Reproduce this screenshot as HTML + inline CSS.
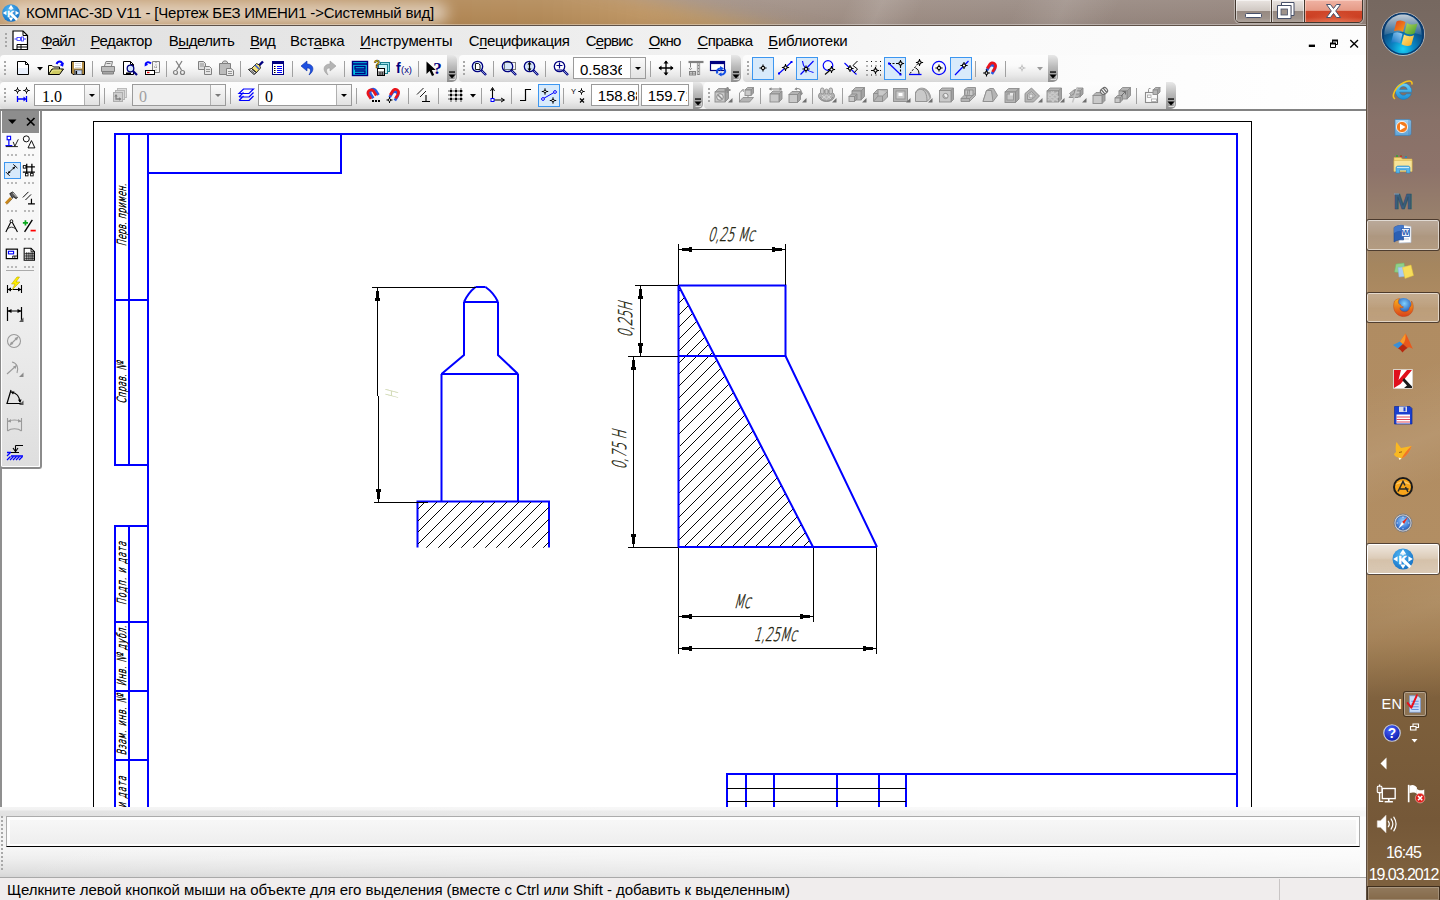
<!DOCTYPE html>
<html lang="ru"><head><meta charset="utf-8"><title>КОМПАС-3D V11</title>
<style>
*{box-sizing:border-box}
html,body{margin:0;padding:0;width:1440px;height:900px;overflow:hidden;background:#fff;font-family:'Liberation Sans',sans-serif;font-size:15px;color:#000}
.abs{position:absolute}
#root{position:absolute;left:0;top:0;width:1440px;height:900px;overflow:hidden}
.t{position:absolute;white-space:pre;line-height:1}
svg{position:absolute;overflow:visible}
.tbp{position:absolute;height:27px;border-radius:4px 0 0 4px;background:linear-gradient(#fdfdfd 0%,#fafafa 40%,#e9e9e9 75%,#d6d6d6 100%)}
.chev{position:absolute;height:27px;width:10px;border-radius:0 5px 5px 0;background:linear-gradient(#e8e8e8 0%,#b9b9b9 45%,#8f8f8f 100%)}
.sep{position:absolute;width:1px;height:16px;background:#a0a0a0}
.grip{position:absolute;width:2px;height:15px;background:repeating-linear-gradient(#a8a8a8 0 2px,transparent 2px 4px)}
.combo{position:absolute;height:22px;border:1px solid #9a9a9a;background:#fff}
.combo .dd{position:absolute;right:0;top:0;bottom:0;width:15px;border-left:1px solid #b0b0b0;background:linear-gradient(#fafafa,#e2e2e2)}
.combo .dd:after{content:"";position:absolute;left:4px;top:9px;border:3px solid transparent;border-top:3px solid #000;border-bottom:0}
.combo.dis{background:#f0f0f0}
.combo.dis .dd:after{border-top-color:#7a7a7a}
.sel{position:absolute;width:22px;height:23px;border:1px solid #3c96f0;background:#d8eafb}
</style></head>
<body><div id="root">
<div class="abs" style="left:0;top:0;width:1367px;height:26px;overflow:hidden;background:linear-gradient(90deg,#a39186 600px,#9f8e84 810px,#998a82 1000px,#918179 1367px)">
<div class="abs" style="left:-40px;top:-40px;width:1000px;height:106px;filter:blur(9px)"><div class="abs" style="left:0;top:0;width:1000px;height:106px;clip-path:polygon(0 0,531px 0,979px 106px,0 106px);background:linear-gradient(90deg,#c6a177 40px,#bc9364 240px,#b18755 490px,#b28957 580px,#bd9462 680px,#bc9868 760px,#b99a70 1000px)"></div></div>
<div class="abs" style="left:700px;top:0;width:667px;height:26px;background:linear-gradient(115deg,transparent 0,transparent 22%,rgba(255,255,255,.12) 27%,transparent 33%,transparent 47%,rgba(255,255,255,.10) 54%,transparent 62%,transparent 100%)"></div>
<div class="abs" style="left:0;top:0;width:1367px;height:26px;background:linear-gradient(rgba(255,255,255,.08) 0,rgba(255,255,255,.02) 60%,rgba(0,0,0,.03) 100%)"></div>
</div>
<div class="abs" style="left:8px;top:3px;width:440px;height:20px;border-radius:10px;background:rgba(255,255,255,.55);filter:blur(7px)"></div>
<div class="abs" style="left:0;top:25px;width:1367px;height:1px;background:#5e5148"></div>
<div class="abs" style="left:0;top:24px;width:1367px;height:1px;background:rgba(255,255,255,.35)"></div>
<svg style="left:1px;top:3px" width="20" height="20" viewBox="0 0 24 24"><defs><radialGradient id="kg0" cx="40%" cy="30%" r="75%"><stop offset="0" stop-color="#4fb4f2"/><stop offset="1" stop-color="#126fc4"/></radialGradient></defs><circle cx="12" cy="12" r="10.5" fill="url(#kg0)"/><path d="M12 2.2L14.8 6.6H9.2ZM12 21.8L9.2 17.4H14.8ZM2.2 12L6.6 9.2V14.8ZM21.8 12L17.4 14.8V9.2Z" fill="#fff"/><path d="M9.3 6.9H14.7M12 6.9V8.6" stroke="#fff" stroke-width="1.3"/><text x="7.6" y="16.6" font-family="'Liberation Sans',sans-serif" font-weight="bold" font-size="11.5" fill="#fff" stroke="#fff" stroke-width=".5">K</text><path d="M11.8 12.6L19.3 20.1" stroke="#fff" stroke-width="3"/></svg>
<div class="t" style="left:26px;top:5px;font-size:15px;color:#000;letter-spacing:-0.191px;">КОМПАС-3D V11 - [Чертеж БЕЗ ИМЕНИ1 ->Системный вид]</div>
<div class="abs" style="left:0;top:26px;width:1366px;height:29px;background:linear-gradient(90deg,#e0e0e0 0,#e6e6e6 300px,#f1f1f1 700px,#fafafa 1000px,#fdfdfd 1366px)"></div>
<div class="grip" style="left:5px;top:33px;height:15px"></div>
<div class="t" style="left:41.25px;top:33px;font-size:15px;color:#000;letter-spacing:-0.910px;"><span style="text-decoration:underline;text-underline-offset:2px">Ф</span>айл</div>
<div class="t" style="left:90.5px;top:33px;font-size:15px;color:#000;letter-spacing:-0.385px;"><span style="text-decoration:underline;text-underline-offset:2px">Р</span>едактор</div>
<div class="t" style="left:168.75px;top:33px;font-size:15px;color:#000;letter-spacing:-0.463px;">В<span style="text-decoration:underline;text-underline-offset:2px">ы</span>делить</div>
<div class="t" style="left:250px;top:33px;font-size:15px;color:#000;letter-spacing:-0.714px;"><span style="text-decoration:underline;text-underline-offset:2px">В</span>ид</div>
<div class="t" style="left:290px;top:33px;font-size:15px;color:#000;letter-spacing:-0.181px;">Вст<span style="text-decoration:underline;text-underline-offset:2px">а</span>вка</div>
<div class="t" style="left:360px;top:33px;font-size:15px;color:#000;letter-spacing:-0.094px;"><span style="text-decoration:underline;text-underline-offset:2px">И</span>нструменты</div>
<div class="t" style="left:468.75px;top:33px;font-size:15px;color:#000;letter-spacing:-0.382px;">С<span style="text-decoration:underline;text-underline-offset:2px">п</span>ецификация</div>
<div class="t" style="left:585.75px;top:33px;font-size:15px;color:#000;letter-spacing:-0.771px;">С<span style="text-decoration:underline;text-underline-offset:2px">е</span>рвис</div>
<div class="t" style="left:648.75px;top:33px;font-size:15px;color:#000;letter-spacing:-0.715px;"><span style="text-decoration:underline;text-underline-offset:2px">О</span>кно</div>
<div class="t" style="left:697.5px;top:33px;font-size:15px;color:#000;letter-spacing:-0.549px;"><span style="text-decoration:underline;text-underline-offset:2px">С</span>правка</div>
<div class="t" style="left:768.25px;top:33px;font-size:15px;color:#000;letter-spacing:-0.203px;"><span style="text-decoration:underline;text-underline-offset:2px">Б</span>иблиотеки</div>
<div class="abs" style="left:0;top:55px;width:1366px;height:54px;background:linear-gradient(90deg,#e2e2e2 0,#ececec 400px,#f6f6f6 800px,#fcfcfc 1100px,#fff 1366px)"></div>
<div class="tbp" style="left:0px;top:55px;width:447px"></div><div class="chev" style="left:447px;top:55px"></div><svg style="left:448px;top:70px" width="8" height="10" viewBox="0 0 8 10"><rect x="1" y="1.4" width="6" height="1.3" fill="#000"/><path d="M.5 4.5H7.5L4 8.5Z" fill="#000"/><path d="M1.5 9.5H7L7.5 5.5" fill="none" stroke="#fff" stroke-width=".8" opacity=".8"/></svg>
<div class="grip" style="left:4px;top:61px"></div>
<svg style="left:15px;top:60px" width="16" height="16" viewBox="0 0 16 16"><path d="M2.5 1.5H10.5L13.5 4.5V14.5H2.5Z" fill="#fff" stroke="#000"/><path d="M10.5 1.5V4.5H13.5" fill="none" stroke="#000"/><path d="M3 8H13V14H3Z" fill="#dfe9fb" opacity=".7"/></svg>
<svg style="left:48px;top:60px" width="16" height="16" viewBox="0 0 16 16"><path d="M.5 14.5V5.5H4L5.5 7H11.5V9" fill="#fffbd0" stroke="#000"/><path d="M.5 14.5L4 9H15.5L11.5 14.5Z" fill="#cfcb62" stroke="#000"/><path d="M2.5 13.5L5 10H13" fill="none" stroke="#f4f0a0" stroke-width=".9"/><path d="M8.5 4C10 .5 13.5 .5 14.5 4" fill="none" stroke="#0000ff" stroke-width="2"/><path d="M16 2.5L15 6.8L11.6 5Z" fill="#0000ff"/></svg>
<svg style="left:70px;top:60px" width="16" height="16" viewBox="0 0 16 16"><path d="M1.5 1.5H14.5V14.5H3L1.5 13Z" fill="#b08a42" stroke="#000"/><rect x="4" y="2" width="8" height="6.5" fill="#fff"/><path d="M5 3.5H11M5 5.5H11M5 7.5H11" stroke="#cfcfcf" stroke-width=".8"/><rect x="4.5" y="10" width="7.5" height="4.5" fill="#c9d9f2" stroke="#444" stroke-width=".7"/><rect x="5.5" y="11" width="1.6" height="3" fill="#000"/></svg>
<svg style="left:100px;top:60px" width="16" height="16" viewBox="0 0 16 16"><path d="M4.5 6L6 1.5H12.5L11.5 6" fill="#e8e8e8" stroke="#808080"/><path d="M1.5 6.5H14.5V11.5H1.5Z" fill="#bdbdbd" stroke="#808080"/><path d="M2.5 11.5H13.5V14H2.5Z" fill="#a5a5a5" stroke="#808080"/><path d="M6.5 3.5H10.5" stroke="#808080"/></svg>
<svg style="left:122px;top:60px" width="16" height="16" viewBox="0 0 16 16"><path d="M1.5 1.5H8.5L11.5 4.5V14.5H1.5Z" fill="#fff" stroke="#000"/><path d="M8.5 1.5V4.5H11.5" fill="none" stroke="#000"/><circle cx="8.5" cy="8.5" r="3.3" fill="#d6e6fa" stroke="#000080" stroke-width="1.3"/><path d="M11 11L15 15" stroke="#000080" stroke-width="2.2"/><path d="M4 13.5H9" stroke="#000" stroke-width="2"/></svg>
<svg style="left:144px;top:60px" width="16" height="16" viewBox="0 0 16 16"><path d="M8.5 1.5H15.5V12.5H8.5Z" fill="#f4f4f4" stroke="#808080"/><path d="M12 2V12" stroke="#808080" stroke-dasharray="1 1.5"/><path d="M10 7H14" stroke="#808080" stroke-dasharray="1 1"/><path d="M1.5 4.5C2 2 5 1.5 7 3.5" fill="none" stroke="#0000ff" stroke-width="2"/><path d="M0.6 6.5L1 2.8L4.2 4.8Z" fill="#0000ff"/><rect x="1.5" y="10.5" width="9" height="4" fill="#fff" stroke="#000"/><path d="M3 12.5H5.5" stroke="#e00" stroke-width="1.4"/></svg>
<svg style="left:171px;top:60px" width="16" height="16" viewBox="0 0 16 16"><path d="M5 1L10.5 10M11 1L5.5 10" stroke="#808080" stroke-width="1.3" fill="none"/><circle cx="4.5" cy="12.5" r="2" fill="none" stroke="#808080" stroke-width="1.2"/><circle cx="11.5" cy="12.5" r="2" fill="none" stroke="#808080" stroke-width="1.2"/></svg>
<svg style="left:197px;top:60px" width="16" height="16" viewBox="0 0 16 16"><path d="M1.5 1.5H6.5L8.5 3.5V9.5H1.5Z" fill="#dcdcdc" stroke="#808080"/><path d="M3 4H7M3 6H7" stroke="#808080" stroke-width=".8"/><path d="M7.5 6.5H12.5L14.5 8.5V14.5H7.5Z" fill="#e6e6e6" stroke="#808080"/><path d="M9 9.5H13M9 11.5H13" stroke="#808080" stroke-width=".8"/></svg>
<svg style="left:218px;top:60px" width="16" height="16" viewBox="0 0 16 16"><path d="M1.5 3.5H12.5V14.5H1.5Z" fill="#bcbcbc" stroke="#808080"/><path d="M4.5 3.5V2L6 1H8L9.5 2V3.5Z" fill="#d5d5d5" stroke="#808080"/><path d="M8.5 8.5H13L15.5 10.5V15.5H8.5Z" fill="#ececec" stroke="#808080"/><path d="M10 11.5H14M10 13.5H14" stroke="#808080" stroke-width=".8"/></svg>
<svg style="left:248px;top:60px" width="16" height="16" viewBox="0 0 16 16"><path d="M15 1.5L10.5 6" stroke="#000080" stroke-width="2.4"/><path d="M11.5 5L8.5 3.5L3.5 8.5L8.5 12.5L12.5 8Z" fill="#f5e27a" stroke="#000" stroke-width=".8"/><path d="M7 5L11 9" stroke="#3a5fcf" stroke-width="1.6"/><path d="M3.5 8.5L0.5 9.5L6 14.5L8.5 12.5Z" fill="#fff" stroke="#000" stroke-width=".9"/><path d="M2.5 10L6.5 13.5M4 9.5L7.5 12.5" stroke="#000" stroke-width=".7"/></svg>
<svg style="left:270px;top:60px" width="16" height="16" viewBox="0 0 16 16"><rect x="2.5" y="1.5" width="11" height="13" fill="#fff" stroke="#000080"/><rect x="2.5" y="1.5" width="11" height="2.5" fill="#000080"/><path d="M4 6.5H5.5M4 8.5H5.5M4 10.5H5.5M4 12.5H5.5" stroke="#000" stroke-width="1.2"/><path d="M7 6.5H12M7 8.5H12M7 10.5H12M7 12.5H12" stroke="#0000ff" stroke-width="1.2"/></svg>
<svg style="left:300px;top:60px" width="16" height="16" viewBox="0 0 16 16"><path d="M7 1L1 6L7 11V8C10 8 12 9.5 9 15C15 11 14 4 7 4Z" fill="#1e50e0" stroke="#0a2fa8" stroke-width=".6"/></svg>
<svg style="left:321px;top:60px" width="16" height="16" viewBox="0 0 16 16"><path d="M9 1L15 6L9 11V8C6 8 4 9.5 7 15C1 11 2 4 9 4Z" fill="#b4b4b4" stroke="#a0a0a0" stroke-width=".6"/></svg>
<svg style="left:352px;top:60px" width="16" height="16" viewBox="0 0 16 16"><rect x=".5" y="1.5" width="15" height="14" fill="#00c8e8" stroke="#000080" stroke-width="1.4"/><path d="M.5 4H15.5" stroke="#000080" stroke-width="1.6"/><path d="M3 6.5H13V9H3ZM3 11H13V13.5H3" fill="none" stroke="#000080" stroke-width="1.3"/></svg>
<svg style="left:374px;top:60px" width="16" height="16" viewBox="0 0 16 16"><rect x="6.5" y="2.5" width="9" height="9" fill="#9adfe8" stroke="#1a7f8f"/><rect x="4.5" y="4.5" width="9" height="9" fill="#c9f0f4" stroke="#1a7f8f"/><rect x="3.5" y="8.5" width="7" height="7" fill="#fff" stroke="#000"/><path d="M3.5 12H10.5M3.5 14H10.5M6 12V15.5M8.3 12V15.5" stroke="#000" stroke-width=".8"/><text x="0" y="8" font-family="'Liberation Sans',sans-serif" font-weight="bold" font-size="10" fill="#ffe400" stroke="#000" stroke-width=".5">?</text></svg>
<svg style="left:396px;top:60px" width="16" height="16" viewBox="0 0 16 16"><text x="0" y="13" font-family="'Liberation Sans',sans-serif" font-weight="bold" font-size="14" fill="#000080">f</text><text x="5" y="12.5" font-family="'Liberation Sans',sans-serif" font-size="9.5" fill="#000080" textLength="11" lengthAdjust="spacingAndGlyphs">(x)</text></svg>
<svg style="left:426px;top:60px" width="16" height="16" viewBox="0 0 16 16"><path d="M.5 1.5V14L3.6 11L6 16L8.2 15L5.8 10H9.8Z" fill="#000"/><text x="7.2" y="13.5" font-family="'Liberation Serif',serif" font-weight="bold" font-size="17" fill="#000080">?</text></svg>
<svg style="left:36.5px;top:67px" width="6" height="3.4" viewBox="0 0 6 3.4"><path d="M0 0H6L3 3.4Z" fill="#000"/></svg>
<div class="sep" style="left:92px;top:61px"></div>
<div class="sep" style="left:166px;top:61px"></div>
<div class="sep" style="left:240px;top:61px"></div>
<div class="sep" style="left:292px;top:61px"></div>
<div class="sep" style="left:344px;top:61px"></div>
<div class="sep" style="left:418px;top:61px"></div>
<div class="tbp" style="left:459px;top:55px;width:272px"></div><div class="chev" style="left:731px;top:55px"></div><svg style="left:732px;top:70px" width="8" height="10" viewBox="0 0 8 10"><rect x="1" y="1.4" width="6" height="1.3" fill="#000"/><path d="M.5 4.5H7.5L4 8.5Z" fill="#000"/><path d="M1.5 9.5H7L7.5 5.5" fill="none" stroke="#fff" stroke-width=".8" opacity=".8"/></svg>
<div class="grip" style="left:463px;top:61px"></div>
<svg style="left:471px;top:60px" width="16" height="16" viewBox="0 0 16 16"><circle cx="6.5" cy="6.5" r="5.2" fill="#d6e6fa" stroke="#000080" stroke-width="1.3"/><path d="M10.5 10.5L15 15" stroke="#000080" stroke-width="2.4"/><path d="M11 11L14.5 14.5" stroke="#9db4e6" stroke-width=".8"/><path d="M4.5 3.5H7.5L9 5V9.5H4.5Z" fill="#fff" stroke="#000" stroke-width=".9"/></svg>
<svg style="left:501px;top:60px" width="16" height="16" viewBox="0 0 16 16"><circle cx="6.5" cy="6.5" r="5.2" fill="#d6e6fa" stroke="#000080" stroke-width="1.3"/><path d="M10.5 10.5L15 15" stroke="#000080" stroke-width="2.4"/><path d="M11 11L14.5 14.5" stroke="#9db4e6" stroke-width=".8"/><rect x="3.5" y="2.5" width="11" height="7" fill="none" stroke="#000" stroke-dasharray="1 1"/></svg>
<svg style="left:523px;top:60px" width="16" height="16" viewBox="0 0 16 16"><circle cx="6.5" cy="6.5" r="5.2" fill="#d6e6fa" stroke="#000080" stroke-width="1.3"/><path d="M10.5 10.5L15 15" stroke="#000080" stroke-width="2.4"/><path d="M11 11L14.5 14.5" stroke="#9db4e6" stroke-width=".8"/><path d="M6.5 2.5V10.5" stroke="#000" stroke-width="1.2"/><path d="M4.5 4.5L6.5 2L8.5 4.5ZM4.5 8.5L6.5 11L8.5 8.5Z" fill="#000"/></svg>
<svg style="left:553px;top:60px" width="16" height="16" viewBox="0 0 16 16"><circle cx="6.5" cy="6.5" r="5.2" fill="#fff" stroke="#000080" stroke-width="1.3"/><path d="M10.5 10.5L15 15" stroke="#000080" stroke-width="2.4"/><path d="M11 11L14.5 14.5" stroke="#9db4e6" stroke-width=".8"/><path d="M3.5 5.5H9.5M6.5 2.5V8.5M3.5 10H9.5" stroke="#000080" stroke-width="1.2"/></svg>
<svg style="left:657.5px;top:60px" width="16" height="16" viewBox="0 0 16 16"><path d="M8 1V15M1 8H15" stroke="#000" stroke-width="1.3"/><path d="M5.5 3.5L8 .5L10.5 3.5ZM5.5 12.5L8 15.5L10.5 12.5ZM3.5 5.5L.5 8L3.5 10.5ZM12.5 5.5L15.5 8L12.5 10.5Z" fill="#000"/></svg>
<svg style="left:688px;top:60px" width="16" height="16" viewBox="0 0 16 16"><path d="M10.5 2V15" stroke="#808080" stroke-width="3.2"/><path d="M9.3 3L11.7 5M9.3 6L11.7 8M9.3 9L11.7 11M9.3 12L11.7 14M11.7 3L9.3 5M11.7 6L9.3 8M11.7 9L9.3 11M11.7 12L9.3 14" stroke="#fff" stroke-width=".7"/><path d="M.5 2H15.5" stroke="#808080" stroke-width="2.2"/><path d="M2.5 3V7.5" stroke="#808080"/><path d="M3.5 8C3.5 10 1 10 1.5 8" fill="none" stroke="#808080"/><rect x="1.5" y="11.5" width="6" height="3.5" fill="#ddd" stroke="#808080"/><path d="M4.5 11.5V15M1.5 13.2H7.5" stroke="#808080" stroke-width=".8"/></svg>
<svg style="left:710px;top:60px" width="16" height="16" viewBox="0 0 16 16"><rect x=".5" y="1.5" width="14" height="9" fill="#fff" stroke="#000080" stroke-width="1.2"/><rect x=".5" y="1.5" width="14" height="2.6" fill="#000080"/><path d="M7.5 13.5C6 11 8 8 11 8.5" fill="none" stroke="#1450e6" stroke-width="2"/><path d="M10 6L14 8.6L10.2 11Z" fill="#1450e6"/><path d="M15 9.5C16 12.5 13.5 15 10.5 14.5" fill="none" stroke="#1450e6" stroke-width="2"/><path d="M11.5 16.5L8 14.3L11.4 12.2Z" fill="#1450e6"/></svg>
<div class="sep" style="left:493px;top:61px"></div>
<div class="sep" style="left:545px;top:61px"></div>
<div class="sep" style="left:650px;top:61px"></div>
<div class="sep" style="left:680px;top:61px"></div>
<div class="combo" style="left:573px;top:57px;width:73px"><div class="dd"></div><div class="abs" style="left:6px;top:0;width:42px;height:20px;overflow:hidden"><div class="t" style="left:0;font-size:15px;top:4.3px;color:#000">0.5836</div></div></div>
<div class="tbp" style="left:743px;top:55px;width:305px"></div><div class="chev" style="left:1048px;top:55px"></div><svg style="left:1049px;top:70px" width="8" height="10" viewBox="0 0 8 10"><rect x="1" y="1.4" width="6" height="1.3" fill="#000"/><path d="M.5 4.5H7.5L4 8.5Z" fill="#000"/><path d="M1.5 9.5H7L7.5 5.5" fill="none" stroke="#fff" stroke-width=".8" opacity=".8"/></svg>
<div class="grip" style="left:747px;top:61px"></div>
<div class="sel" style="left:752px;top:57px"></div>
<div class="sel" style="left:796px;top:57px"></div>
<div class="sel" style="left:884px;top:57px"></div>
<div class="sel" style="left:950px;top:57px"></div>
<svg style="left:755px;top:60px" width="16" height="16" viewBox="0 0 16 16"><circle cx="8" cy="8" r="1.6" fill="#fff" stroke="#000" stroke-width="1.1"/><path d="M4.4 8H6.4M9.6 8H11.6M8 4.4V6.4M8 9.6V11.6" stroke="#000" stroke-width="1.1"/></svg>
<svg style="left:777px;top:60px" width="16" height="16" viewBox="0 0 16 16"><path d="M2 13.5L14.5 2" stroke="#0000ff" stroke-width="1.1"/><rect x="1" y="12.5" width="2" height="2" fill="#0000ff"/><rect x="13.5" y="1" width="2" height="2" fill="#0000ff"/><circle cx="8.5" cy="7.5" r="1.6" fill="#fff" stroke="#000" stroke-width="1.1"/><path d="M4.9 7.5H6.9M10.1 7.5H12.1M8.5 3.9V5.9M8.5 9.1V11.1" stroke="#000" stroke-width="1.1"/></svg>
<svg style="left:799px;top:60px" width="16" height="16" viewBox="0 0 16 16"><path d="M3.5 1C4 7 7 11 14.5 12.5" fill="none" stroke="#0000ff" stroke-width="1.1"/><path d="M1.5 14.5L14.5 1" stroke="#0000ff" stroke-width="1.1"/><circle cx="7" cy="9" r="1.6" fill="#fff" stroke="#000" stroke-width="1.1"/><path d="M3.4 9H5.4M8.6 9H10.6M7 5.4V7.4M7 10.6V12.6" stroke="#000" stroke-width="1.1"/></svg>
<svg style="left:821px;top:60px" width="16" height="16" viewBox="0 0 16 16"><circle cx="7" cy="5.5" r="4.8" fill="none" stroke="#0000ff" stroke-width="1.2"/><path d="M4 14.5L11 8.5" stroke="#000" stroke-width="1.1"/><circle cx="10.5" cy="9.5" r="1.6" fill="#fff" stroke="#000" stroke-width="1.1"/><path d="M6.9 9.5H8.9M12.1 9.5H14.1M10.5 5.9V7.9M10.5 11.1V13.1" stroke="#000" stroke-width="1.1"/></svg>
<svg style="left:843px;top:60px" width="16" height="16" viewBox="0 0 16 16"><path d="M1.5 3L13.5 14.5" stroke="#0000ff" stroke-width="1.1"/><path d="M14.5 1L10 5.5L14.5 9L11 13" fill="none" stroke="#000" stroke-width="1"/><circle cx="7" cy="8.5" r="1.6" fill="#fff" stroke="#000" stroke-width="1.1"/><path d="M3.4 8.5H5.4M8.6 8.5H10.6M7 4.9V6.9M7 10.1V12.1" stroke="#000" stroke-width="1.1"/></svg>
<svg style="left:865px;top:60px" width="16" height="16" viewBox="0 0 16 16"><rect x="1.5" y="1" width="1" height="1" fill="#000"/><rect x="1.5" y="5.5" width="1" height="1" fill="#000"/><rect x="1.5" y="10" width="1" height="1" fill="#000"/><rect x="1.5" y="14.5" width="1" height="1" fill="#000"/><rect x="6" y="1" width="1" height="1" fill="#000"/><rect x="6" y="5.5" width="1" height="1" fill="#000"/><rect x="6" y="10" width="1" height="1" fill="#000"/><rect x="6" y="14.5" width="1" height="1" fill="#000"/><rect x="10.5" y="1" width="1" height="1" fill="#000"/><rect x="10.5" y="5.5" width="1" height="1" fill="#000"/><rect x="10.5" y="10" width="1" height="1" fill="#000"/><rect x="10.5" y="14.5" width="1" height="1" fill="#000"/><rect x="15" y="1" width="1" height="1" fill="#000"/><rect x="15" y="5.5" width="1" height="1" fill="#000"/><rect x="15" y="10" width="1" height="1" fill="#000"/><rect x="15" y="14.5" width="1" height="1" fill="#000"/><circle cx="10.5" cy="10.5" r="1.6" fill="#fff" stroke="#000" stroke-width="1.1"/><path d="M6.9 10.5H8.9M12.1 10.5H14.1M10.5 6.9V8.9M10.5 12.1V14.1" stroke="#000" stroke-width="1.1"/></svg>
<svg style="left:887px;top:60px" width="16" height="16" viewBox="0 0 16 16"><path d="M2 3.5L13.5 14.5" stroke="#0000ff" stroke-width="1.2"/><path d="M2 3.5H13.5V14.5" fill="none" stroke="#000" stroke-width="1.1" stroke-dasharray="2 1.5"/><rect x="1" y="2.5" width="2" height="2" fill="#0000ff"/><rect x="12.5" y="13.5" width="2" height="2" fill="#0000ff"/><circle cx="13.5" cy="3.5" r="1.6" fill="#fff" stroke="#000" stroke-width="1.1"/><path d="M9.9 3.5H11.9M15.1 3.5H17.1M13.5 -0.10000000000000009V1.9M13.5 5.1V7.1" stroke="#000" stroke-width="1.1"/></svg>
<svg style="left:909px;top:60px" width="16" height="16" viewBox="0 0 16 16"><path d="M0 14.5H12.5" stroke="#0000ff" stroke-width="1.3"/><path d="M1 13.5L9 3.5" stroke="#000" stroke-width="1" stroke-dasharray="2 1.5"/><path d="M6.5 8C9 9 10 11 10 14" fill="none" stroke="#000" stroke-width="1"/><circle cx="10.5" cy="2.5" r="1.6" fill="#fff" stroke="#000" stroke-width="1.1"/><path d="M6.9 2.5H8.9M12.1 2.5H14.1M10.5 -1.1V0.8999999999999999M10.5 4.1V6.1" stroke="#000" stroke-width="1.1"/></svg>
<svg style="left:931px;top:60px" width="16" height="16" viewBox="0 0 16 16"><circle cx="8" cy="8" r="6.6" fill="none" stroke="#0000ff" stroke-width="1.2"/><circle cx="8" cy="8" r="1.6" fill="#fff" stroke="#000" stroke-width="1.1"/><path d="M4.4 8H6.4M9.6 8H11.6M8 4.4V6.4M8 9.6V11.6" stroke="#000" stroke-width="1.1"/></svg>
<svg style="left:953px;top:60px" width="16" height="16" viewBox="0 0 16 16"><path d="M2 15L15.5 1" stroke="#0000ff" stroke-width="1.2"/><circle cx="11" cy="5.5" r="1.6" fill="#fff" stroke="#000" stroke-width="1.1"/><path d="M7.4 5.5H9.4M12.6 5.5H14.6M11 1.9V3.9M11 7.1V9.1" stroke="#000" stroke-width="1.1"/></svg>
<svg style="left:983px;top:60px" width="16" height="16" viewBox="0 0 16 16"><g transform="translate(2.5,0) rotate(32 7 6)"><path d="M2.5 11V6A4.5 4.5 0 0 1 11.5 6V11H8.7V6A1.7 1.7 0 0 0 5.3 6V11Z" transform="translate(0.6,2.2)" fill="#2a5ae0"/><path d="M2.5 11V6A4.5 4.5 0 0 1 11.5 6V11H8.7V6A1.7 1.7 0 0 0 5.3 6V11Z" fill="#e8141c"/></g><circle cx="3.5" cy="13" r="1.4" fill="#fff" stroke="#000" stroke-width="1.1"/><path d="M0.10000000000000009 13H2.1M4.9 13H6.9M3.5 9.6V11.6M3.5 14.4V16.4" stroke="#000" stroke-width="1.1"/></svg>
<svg style="left:1014px;top:60px" width="16" height="16" viewBox="0 0 16 16"><circle cx="8" cy="8" r="1.4" fill="#fff" stroke="#b8b8b8" stroke-width="1"/><path d="M4.6 8H6.6M9.4 8H11.4M8 4.6V6.6M8 9.4V11.4" stroke="#b8b8b8" stroke-width="1"/></svg>
<div class="sep" style="left:975px;top:61px"></div>
<div class="sep" style="left:1005px;top:61px"></div>
<svg style="left:1036.5px;top:67px" width="6" height="3.4" viewBox="0 0 6 3.4"><path d="M0 0H6L3 3.4Z" fill="#9a9a9a"/></svg>
<div class="tbp" style="left:0px;top:82px;width:693px"></div><div class="chev" style="left:693px;top:82px"></div><svg style="left:694px;top:97px" width="8" height="10" viewBox="0 0 8 10"><rect x="1" y="1.4" width="6" height="1.3" fill="#000"/><path d="M.5 4.5H7.5L4 8.5Z" fill="#000"/><path d="M1.5 9.5H7L7.5 5.5" fill="none" stroke="#fff" stroke-width=".8" opacity=".8"/></svg>
<div class="grip" style="left:4px;top:88px"></div>
<svg style="left:14px;top:86px" width="16" height="17" viewBox="0 0 16 17"><circle cx="3.5" cy="4.5" r="1.4" fill="#fff" stroke="#000" stroke-width="1"/><path d="M0.2999999999999998 4.5H2.1M4.9 4.5H6.7M3.5 1.2999999999999998V3.1M3.5 5.9V7.7" stroke="#000" stroke-width="1"/><circle cx="12.5" cy="4.5" r="1.4" fill="#fff" stroke="#000" stroke-width="1"/><path d="M9.3 4.5H11.1M13.9 4.5H15.7M12.5 1.2999999999999998V3.1M12.5 5.9V7.7" stroke="#000" stroke-width="1"/><path d="M3.5 10V16M12.5 10V16M3.5 13H11" stroke="#0000ff" stroke-width="1.3"/><path d="M9.5 10.5L12.5 13L9.5 15.5Z" fill="#0000ff"/></svg>
<div class="combo" style="left:34px;top:84px;width:66px"><div class="dd"></div><div class="abs" style="left:7px;top:0;width:42px;height:20px;overflow:hidden"><div class="t" style="left:0;font-family:'Liberation Serif',serif;font-size:16px;top:3.6px;color:#000">1.0</div></div></div>
<div class="sep" style="left:104px;top:88px"></div>
<svg style="left:112px;top:87px" width="16" height="16" viewBox="0 0 16 16"><rect x="5.5" y="1.5" width="9" height="9" fill="#ddd" stroke="#bbb"/><rect x="3.5" y="3.5" width="9" height="9" fill="#d6d6d6" stroke="#b4b4b4"/><rect x="1.5" y="5.5" width="9" height="9" fill="#cfcfcf" stroke="#adadad"/><path d="M4 8V12H8.5" fill="none" stroke="#808080" stroke-width="1.3"/><path d="M2.3 9.5L4 7L5.7 9.5ZM7 10.3L9.5 12L7 13.7Z" fill="#808080"/></svg>
<div class="combo dis" style="left:132px;top:84px;width:94px"><div class="dd"></div><div class="abs" style="left:6px;top:0;width:71px;height:20px;overflow:hidden"><div class="t" style="left:0;font-family:'Liberation Serif',serif;font-size:16px;top:3.6px;color:#a0a0a0">0</div></div></div>
<div class="sep" style="left:230px;top:88px"></div>
<svg style="left:238px;top:87px" width="16" height="16" viewBox="0 0 16 16"><path d="M1 6.5L5.5 2H15.5L11 6.5ZM1 10L5.5 5.5M11 10L15.5 5.5M1 10H11M1 13.5H11M1 13.5L5.5 9M11 13.5L15.5 9" fill="none" stroke="#0000ff" stroke-width="1.2"/></svg>
<div class="combo" style="left:258px;top:84px;width:94px"><div class="dd"></div><div class="abs" style="left:6px;top:0;width:71px;height:20px;overflow:hidden"><div class="t" style="left:0;font-family:'Liberation Serif',serif;font-size:16px;top:3.6px;color:#000">0</div></div></div>
<div class="sep" style="left:356px;top:88px"></div>
<div class="sep" style="left:408px;top:88px"></div>
<div class="sep" style="left:438px;top:88px"></div>
<div class="sep" style="left:481px;top:88px"></div>
<div class="sep" style="left:511px;top:88px"></div>
<div class="sep" style="left:563px;top:88px"></div>
<svg style="left:364px;top:87px" width="16" height="16" viewBox="0 0 16 16"><g transform="translate(0,0) rotate(-32 7 6)"><path d="M2.5 11V6A4.5 4.5 0 0 1 11.5 6V11H8.7V6A1.7 1.7 0 0 0 5.3 6V11Z" transform="translate(2.2,0.6)" fill="#2a5ae0"/><path d="M2.5 11V6A4.5 4.5 0 0 1 11.5 6V11H8.7V6A1.7 1.7 0 0 0 5.3 6V11Z" fill="#e8141c"/></g><rect x="8" y="13" width="2" height="2" fill="#000"/><rect x="11" y="13" width="2" height="2" fill="#000"/><rect x="14" y="13" width="2" height="2" fill="#000"/></svg>
<svg style="left:386px;top:87px" width="16" height="16" viewBox="0 0 16 16"><g transform="translate(2.5,-0.5) rotate(32 7 6)"><path d="M2.5 11V6A4.5 4.5 0 0 1 11.5 6V11H8.7V6A1.7 1.7 0 0 0 5.3 6V11Z" transform="translate(0.6,2.2)" fill="#2a5ae0"/><path d="M2.5 11V6A4.5 4.5 0 0 1 11.5 6V11H8.7V6A1.7 1.7 0 0 0 5.3 6V11Z" fill="#e8141c"/></g><circle cx="3.5" cy="13" r="1.3" fill="#fff" stroke="#000" stroke-width="1"/><path d="M0.5 13H2.2M4.8 13H6.5M3.5 10V11.7M3.5 14.3V16" stroke="#000" stroke-width="1"/></svg>
<svg style="left:416px;top:87px" width="16" height="16" viewBox="0 0 16 16"><path d="M1 7.5L7.5 1M4 10L10 4" stroke="#000" stroke-width=".9"/><path d="M6 14.5H14M10 14.5V8" stroke="#000" stroke-width="1.1"/></svg>
<svg style="left:448px;top:87px" width="16" height="16" viewBox="0 0 16 16"><path d="M0 4H15M0 8H15M0 12H15M3 1V15M8 1V15M13 1V15" stroke="#000" stroke-width="2" opacity=".32" shape-rendering="crispEdges"/><rect x="2" y="3" width="2" height="2" fill="#000" shape-rendering="crispEdges"/><rect x="2" y="7" width="2" height="2" fill="#000" shape-rendering="crispEdges"/><rect x="2" y="11" width="2" height="2" fill="#000" shape-rendering="crispEdges"/><rect x="7" y="3" width="2" height="2" fill="#000" shape-rendering="crispEdges"/><rect x="7" y="7" width="2" height="2" fill="#000" shape-rendering="crispEdges"/><rect x="7" y="11" width="2" height="2" fill="#000" shape-rendering="crispEdges"/><rect x="12" y="3" width="2" height="2" fill="#000" shape-rendering="crispEdges"/><rect x="12" y="7" width="2" height="2" fill="#000" shape-rendering="crispEdges"/><rect x="12" y="11" width="2" height="2" fill="#000" shape-rendering="crispEdges"/></svg>
<svg style="left:489px;top:87px" width="16" height="16" viewBox="0 0 16 16"><path d="M3.5 13V1.5M3.5 13H15" stroke="#000" stroke-width="1.1"/><path d="M1.5 4L3.5 .5L5.5 4M12 11L15.5 13L12 15" fill="none" stroke="#000" stroke-width="1"/><rect x="2" y="11.5" width="3" height="3" fill="#fff" stroke="#0000ff"/></svg>
<svg style="left:519px;top:87px" width="16" height="16" viewBox="0 0 16 16"><path d="M1 13.5H6.5V2.5H12" fill="none" stroke="#000" stroke-width="1.2"/></svg>
<svg style="left:571px;top:87px" width="16" height="16" viewBox="0 0 16 16"><text x="0" y="6.5" font-family="'Liberation Sans',sans-serif" font-size="7.5" fill="#000">Y</text><circle cx="10.5" cy="4.5" r="1.3" fill="#fff" stroke="#000" stroke-width="1"/><path d="M7.3 4.5H9.2M11.8 4.5H13.7M10.5 1.2999999999999998V3.2M10.5 5.8V7.7" stroke="#000" stroke-width="1"/><path d="M9 11.5L13 15.5M13 11.5L9 15.5" stroke="#000" stroke-width="1.2"/></svg>
<svg style="left:469.5px;top:94px" width="6" height="3.4" viewBox="0 0 6 3.4"><path d="M0 0H6L3 3.4Z" fill="#000"/></svg>
<div class="sel" style="left:538px;top:84px"></div>
<svg style="left:541px;top:88px" width="16" height="16" viewBox="0 0 16 16"><circle cx="4" cy="3.5" r="1.3" fill="#fff" stroke="#000" stroke-width="1"/><path d="M0.7999999999999998 3.5H2.7M5.3 3.5H7.2M4 0.2999999999999998V2.2M4 4.8V6.7" stroke="#000" stroke-width="1"/><circle cx="12" cy="12.5" r="1.3" fill="#fff" stroke="#000" stroke-width="1"/><path d="M8.8 12.5H10.7M13.3 12.5H15.2M12 9.3V11.2M12 13.8V15.7" stroke="#000" stroke-width="1"/><path d="M2.5 10.5L13 4.5" stroke="#0000ff" stroke-width="1"/><circle cx="2" cy="11" r="1.4" fill="#fff" stroke="#0000ff"/><circle cx="14" cy="4" r="1.4" fill="#fff" stroke="#0000ff"/></svg>
<div class="combo" style="left:591px;top:84px;width:48px"><div class="abs" style="left:5.7px;top:0;width:39.099999999999994px;height:20px;overflow:hidden"><div class="t" style="left:0;top:3px;font-size:15px">158.88</div></div></div>
<div class="combo" style="left:641px;top:84px;width:48px"><div class="abs" style="left:5.7px;top:0;width:39.099999999999994px;height:20px;overflow:hidden"><div class="t" style="left:0;top:3px;font-size:15px">159.71</div></div></div>
<div class="tbp" style="left:704px;top:82px;width:462px"></div><div class="chev" style="left:1166px;top:82px"></div><svg style="left:1167px;top:97px" width="8" height="10" viewBox="0 0 8 10"><rect x="1" y="1.4" width="6" height="1.3" fill="#000"/><path d="M.5 4.5H7.5L4 8.5Z" fill="#000"/><path d="M1.5 9.5H7L7.5 5.5" fill="none" stroke="#fff" stroke-width=".8" opacity=".8"/></svg>
<div class="grip" style="left:708px;top:88px"></div>
<svg style="left:714px;top:87px" width="19" height="16" viewBox="0 0 19 16"><path d="M1 5.0L4.5 1.5H14.5L11 5.0Z" fill="#b4b4b4" stroke="#8c8c8c" stroke-width=".9"/><path d="M11 5.0L14.5 1.5V11.5L11 15.0Z" fill="#a2a2a2" stroke="#8c8c8c" stroke-width=".9"/><rect x="1" y="5.0" width="10" height="10" fill="#c9c9c9" stroke="#8c8c8c" stroke-width=".9"/><circle cx="6" cy="10" r="3.3" fill="#e6e6e6" stroke="#8c8c8c"/><path d="M4 8L8 12" stroke="#8c8c8c" stroke-width="1.5"/><path d="M13.5 0V6M10.5 3H16.5" stroke="#8c8c8c" stroke-width="1.8"/><path d="M18.5 11V15.5H14Z" fill="#6e6e6e"/></svg>
<svg style="left:738px;top:87px" width="19" height="16" viewBox="0 0 19 16"><path d="M1 15L5 10.5H15.5L11.5 15Z" fill="#b4b4b4" stroke="#8c8c8c" stroke-width=".9"/><path d="M1.5 14.5V6L5 2.5" fill="none" stroke="#8c8c8c" stroke-width=".9"/><path d="M3 4.5L5.2 2.2L5.4 5" fill="none" stroke="#8c8c8c" stroke-width=".8"/><path d="M7 3.0L9.5 0.5H15.5L13 3.0Z" fill="#b4b4b4" stroke="#8c8c8c" stroke-width=".9"/><path d="M13 3.0L15.5 0.5V6.0L13 8.5Z" fill="#a2a2a2" stroke="#8c8c8c" stroke-width=".9"/><rect x="7" y="3.0" width="6" height="5.5" fill="#c9c9c9" stroke="#8c8c8c" stroke-width=".9"/><path d="M10 9V11" stroke="#8c8c8c"/></svg>
<svg style="left:768px;top:87px" width="19" height="16" viewBox="0 0 19 16"><path d="M2 7L5 4H14L11 7Z" fill="#b4b4b4" stroke="#8c8c8c" stroke-width=".9"/><path d="M11 7L14 4V12L11 15Z" fill="#a2a2a2" stroke="#8c8c8c" stroke-width=".9"/><rect x="2" y="7" width="9" height="8" fill="#c9c9c9" stroke="#8c8c8c" stroke-width=".9"/><path d="M1.5 2H13.5" stroke="#8c8c8c" stroke-width="1.1"/><path d="M3.5 .3L.8 2L3.5 3.7ZM11.5 .3L14.2 2L11.5 3.7Z" fill="#8c8c8c"/></svg>
<svg style="left:788px;top:87px" width="19" height="16" viewBox="0 0 19 16"><path d="M1 7.5L4 4.5H12.5L9.5 7.5Z" fill="#b4b4b4" stroke="#8c8c8c" stroke-width=".9"/><path d="M9.5 7.5L12.5 4.5V12.5L9.5 15.5Z" fill="#a2a2a2" stroke="#8c8c8c" stroke-width=".9"/><rect x="1" y="7.5" width="8.5" height="8" fill="#c9c9c9" stroke="#8c8c8c" stroke-width=".9"/><path d="M7.5 2C11 .5 14 3 13.5 7" fill="none" stroke="#8c8c8c" stroke-width="1.1"/><path d="M8.8 .3L6.3 2.3L9.2 3.6ZM11.8 5.8L13.5 8.6L15.2 5.8Z" fill="#8c8c8c"/><path d="M18.5 11V15.5H14Z" fill="#6e6e6e"/></svg>
<svg style="left:818px;top:87px" width="19" height="16" viewBox="0 0 19 16"><ellipse cx="8.5" cy="9" rx="8" ry="5.5" fill="#b4b4b4" stroke="#8c8c8c" stroke-width=".9"/><path d="M2 10C5 15.5 12 15.5 15 10" fill="none" stroke="#8c8c8c"/><rect x="2.5" y="1" width="3.5" height="6" rx="1.7" fill="#c9c9c9" stroke="#8c8c8c" stroke-width=".9"/><rect x="11" y="1" width="3.5" height="6" rx="1.7" fill="#c9c9c9" stroke="#8c8c8c" stroke-width=".9"/><rect x="7" y="2" width="3" height="5" rx="1.5" fill="#c9c9c9" stroke="#8c8c8c" stroke-width=".9"/><path d="M4 8L8.5 12L13 8M4 12L8.5 8L13 12" stroke="#dcdcdc" stroke-width=".9" fill="none"/><path d="M18.5 11V15.5H14Z" fill="#6e6e6e"/></svg>
<svg style="left:848px;top:87px" width="19" height="16" viewBox="0 0 19 16"><path d="M4 4.0L7.5 0.5H16.5L13 4.0Z" fill="#b4b4b4" stroke="#8c8c8c" stroke-width=".9"/><path d="M13 4.0L16.5 0.5V9.5L13 13.0Z" fill="#a2a2a2" stroke="#8c8c8c" stroke-width=".9"/><rect x="4" y="4.0" width="9" height="9" fill="#b4b4b4" stroke="#8c8c8c" stroke-width=".9"/><path d="M1 9.5L3.5 7H9.0L6.5 9.5Z" fill="#b4b4b4" stroke="#8c8c8c" stroke-width=".9"/><path d="M6.5 9.5L9.0 7V12L6.5 14.5Z" fill="#a2a2a2" stroke="#8c8c8c" stroke-width=".9"/><rect x="1" y="9.5" width="5.5" height="5" fill="#c9c9c9" stroke="#8c8c8c" stroke-width=".9"/><path d="M18.5 11V15.5H14Z" fill="#6e6e6e"/></svg>
<svg style="left:872px;top:87px" width="19" height="16" viewBox="0 0 19 16"><path d="M1.5 14.5V6.5L5.5 2.5H15.5V10L11 14.5Z" fill="#b4b4b4" stroke="#8c8c8c" stroke-width=".9"/><path d="M6 3V9H10.5L15 5" fill="#c9c9c9" stroke="#8c8c8c" stroke-width=".9"/><path d="M1.5 6.5H6M6 9L1.8 14M10.5 9V14.5" fill="none" stroke="#8c8c8c" stroke-width=".9"/></svg>
<svg style="left:892px;top:87px" width="19" height="16" viewBox="0 0 19 16"><rect x="1.5" y="1.5" width="14" height="13" fill="#b4b4b4" stroke="#8c8c8c" stroke-width=".9"/><rect x="4" y="4" width="9" height="8" fill="#c9c9c9" stroke="#8c8c8c" stroke-width=".8"/><rect x="6.5" y="6" width="4" height="3" fill="#fff"/><path d="M18.5 11V15.5H14Z" fill="#6e6e6e"/></svg>
<svg style="left:914px;top:87px" width="19" height="16" viewBox="0 0 19 16"><path d="M1.5 14.5V6C3 1.5 7 .5 10 1.5C13.5 2.5 16 6 16.5 11L13 14.5Z" fill="#c9c9c9" stroke="#8c8c8c" stroke-width=".9"/><path d="M1.5 6C3 2.5 6 2 8 2.5C11 3.5 13 7 13 14.5" fill="none" stroke="#8c8c8c" stroke-width=".9"/><path d="M8 2.5C11.5 1.5 15 5 16.5 11" fill="none" stroke="#a2a2a2" stroke-width="1.6"/><path d="M18.5 11V15.5H14Z" fill="#6e6e6e"/></svg>
<svg style="left:938px;top:87px" width="19" height="16" viewBox="0 0 19 16"><path d="M1.5 3.5L4.0 1H15.5L13.0 3.5Z" fill="#b4b4b4" stroke="#8c8c8c" stroke-width=".9"/><path d="M13.0 3.5L15.5 1V12.5L13.0 15.0Z" fill="#a2a2a2" stroke="#8c8c8c" stroke-width=".9"/><rect x="1.5" y="3.5" width="11.5" height="11.5" fill="#c9c9c9" stroke="#8c8c8c" stroke-width=".9"/><circle cx="7.5" cy="9" r="2.6" fill="#efefef" stroke="#8c8c8c" stroke-width="1"/><path d="M5.5 8C6 10.5 8 11.5 9.5 10.5" fill="none" stroke="#a2a2a2" stroke-width="1.3"/></svg>
<svg style="left:960px;top:87px" width="19" height="16" viewBox="0 0 19 16"><path d="M1 14.5V11.5L4.5 8V2.5L7.5 .5H15.5V8.5L9.5 14.5Z" fill="#b4b4b4" stroke="#8c8c8c" stroke-width=".9"/><path d="M5 3H13V8.5H5Z" fill="#c9c9c9" stroke="#8c8c8c" stroke-width=".8"/><path d="M8 3L6.5 11M9.5 3L9 9" stroke="#8c8c8c" stroke-width=".9"/><path d="M1 11.5H9.5L15.5 6M9.5 11.5V14.5" fill="none" stroke="#8c8c8c" stroke-width=".9"/></svg>
<svg style="left:982px;top:87px" width="19" height="16" viewBox="0 0 19 16"><path d="M1 14.5L4.5 3.5L8 1.5H11.5L15.5 8.5L11 14.5Z" fill="#b4b4b4" stroke="#8c8c8c" stroke-width=".9"/><path d="M1 14.5L4.5 3.5H9.5L11 14.5Z" fill="#c9c9c9" stroke="#8c8c8c" stroke-width=".9"/></svg>
<svg style="left:1004px;top:87px" width="19" height="16" viewBox="0 0 19 16"><path d="M1 5.0L4.5 1.5H15.0L11.5 5.0Z" fill="#b4b4b4" stroke="#8c8c8c" stroke-width=".9"/><path d="M11.5 5.0L15.0 1.5V12.0L11.5 15.5Z" fill="#a2a2a2" stroke="#8c8c8c" stroke-width=".9"/><rect x="1" y="5.0" width="10.5" height="10.5" fill="#b4b4b4" stroke="#8c8c8c" stroke-width=".9"/><rect x="3" y="7" width="6.5" height="6" fill="#c9c9c9" stroke="#8c8c8c" stroke-width=".8"/><rect x="6" y="6" width="3" height="2.5" fill="#e8e8e8"/></svg>
<svg style="left:1024px;top:87px" width="19" height="16" viewBox="0 0 19 16"><path d="M1 6.5L7.5 1L15.5 9L9.5 15H1Z" fill="#b4b4b4" stroke="#8c8c8c" stroke-width=".9"/><path d="M3.5 7.5L7.5 4.5L11.5 9L7.5 12.5H3.5Z" fill="#c9c9c9" stroke="#8c8c8c" stroke-width=".8"/><circle cx="7" cy="9" r="2" fill="#e4e4e4" stroke="#8c8c8c" stroke-width=".7"/><path d="M18.5 11V15.5H14Z" fill="#6e6e6e"/></svg>
<svg style="left:1046px;top:87px" width="19" height="16" viewBox="0 0 19 16"><path d="M1 4L4 1H15.5L12.5 4Z" fill="#b4b4b4" stroke="#8c8c8c" stroke-width=".9"/><path d="M12.5 4L15.5 1V12L12.5 15Z" fill="#a2a2a2" stroke="#8c8c8c" stroke-width=".9"/><rect x="1" y="4" width="11.5" height="11" fill="#b4b4b4" stroke="#8c8c8c" stroke-width=".9"/><path d="M2 6.5L12 14M2 10L8 14.5M5 4.5L12.5 10.5M12 5L2 13M12.5 9L6 14.5M8 4.5L2 9.5" stroke="#c9c9c9" stroke-width="1.5"/><path d="M18.5 11V15.5H14Z" fill="#6e6e6e"/></svg>
<svg style="left:1068px;top:87px" width="19" height="16" viewBox="0 0 19 16"><path d="M6 4L9 1H15L12 4Z" fill="#b4b4b4" stroke="#8c8c8c" stroke-width=".9"/><path d="M12 4L15 1V7L12 10Z" fill="#a2a2a2" stroke="#8c8c8c" stroke-width=".9"/><rect x="6" y="4" width="6" height="6" fill="#c9c9c9" stroke="#8c8c8c" stroke-width=".9"/><path d="M1 10.5L4 7H13L10 10.5Z" fill="#b4b4b4" stroke="#8c8c8c" stroke-width=".9"/><path d="M1.5 6.5L6.5 2.5V6L3.5 8.5Z" fill="#b4b4b4" stroke="#8c8c8c" stroke-width=".8"/><path d="M9.5 0L4.5 15.5" stroke="#c4c4c4" stroke-width="1.5"/><path d="M18.5 11V15.5H14Z" fill="#6e6e6e"/></svg>
<svg style="left:1092px;top:87px" width="19" height="16" viewBox="0 0 19 16"><path d="M1 8.5L4 5.5H13L10 8.5Z" fill="#b4b4b4" stroke="#8c8c8c" stroke-width=".9"/><path d="M10 8.5L13 5.5V13.5L10 16.5Z" fill="#a2a2a2" stroke="#8c8c8c" stroke-width=".9"/><rect x="1" y="8.5" width="9" height="8" fill="#c9c9c9" stroke="#8c8c8c" stroke-width=".9"/><g transform="rotate(-40 12 4)"><rect x="8.5" y="1" width="7" height="6" rx="2.5" fill="#fff" stroke="#6e6e6e" stroke-width="1.1"/><path d="M10.8 1V7M13.2 1V7" stroke="#6e6e6e" stroke-width="1.3"/></g></svg>
<svg style="left:1114px;top:87px" width="19" height="16" viewBox="0 0 19 16"><path d="M5 4.0L8.5 0.5H16.5L13 4.0Z" fill="#b4b4b4" stroke="#8c8c8c" stroke-width=".9"/><path d="M13 4.0L16.5 0.5V8.5L13 12.0Z" fill="#a2a2a2" stroke="#8c8c8c" stroke-width=".9"/><rect x="5" y="4.0" width="8" height="8" fill="#b4b4b4" stroke="#8c8c8c" stroke-width=".9"/><path d="M1 11.0L3.5 8.5H8.5L6 11.0Z" fill="#b4b4b4" stroke="#8c8c8c" stroke-width=".9"/><path d="M6 11.0L8.5 8.5V13.0L6 15.5Z" fill="#a2a2a2" stroke="#8c8c8c" stroke-width=".9"/><rect x="1" y="11.0" width="5" height="4.5" fill="#c9c9c9" stroke="#8c8c8c" stroke-width=".9"/><path d="M7 9L11.5 4.5M8.5 4.5H11.5V7.5" fill="none" stroke="#6e6e6e" stroke-width="1"/></svg>
<svg style="left:1144px;top:87px" width="19" height="16" viewBox="0 0 19 16"><rect x="1.5" y="5.5" width="12" height="10" fill="#fafafa" stroke="#8c8c8c" stroke-width="1.1"/><rect x="3.5" y="8" width="3.5" height="2.5" fill="#fff" stroke="#a2a2a2" stroke-width=".8"/><rect x="7.5" y="12" width="5" height="2.5" fill="#fff" stroke="#a2a2a2" stroke-width=".8"/><path d="M9 3.0L11.5 0.5H16.0L13.5 3.0Z" fill="#b4b4b4" stroke="#8c8c8c" stroke-width=".9"/><path d="M13.5 3.0L16.0 0.5V5.0L13.5 7.5Z" fill="#a2a2a2" stroke="#8c8c8c" stroke-width=".9"/><rect x="9" y="3.0" width="4.5" height="4.5" fill="#b4b4b4" stroke="#8c8c8c" stroke-width=".9"/><path d="M4.5 5V2.5Q4.5 1 6.5 1.5" fill="none" stroke="#8c8c8c" stroke-width=".9"/></svg>
<div class="sep" style="left:760px;top:88px"></div>
<div class="sep" style="left:812px;top:88px"></div>
<div class="sep" style="left:842px;top:88px"></div>
<div class="sep" style="left:1136px;top:88px"></div>
<svg style="left:1308px;top:37px" width="52" height="14" viewBox="0 0 52 14"><rect x=".8" y="7.6" width="6.2" height="2.4" fill="#000"/><path d="M24.5 3.5H29.5V7.5H24.5Z" fill="none" stroke="#000" stroke-width="1"/><path d="M24 3.5H30" stroke="#000" stroke-width="2"/><path d="M22.5 6.5H27.5V10.5H22.5Z" fill="#fff" stroke="#000" stroke-width="1"/><path d="M22 6.5H28" stroke="#000" stroke-width="2"/><path d="M42.3 3L50 10.6M50 3L42.3 10.6" stroke="#000" stroke-width="1.35"/></svg>
<div class="abs" style="left:1364px;top:111px;width:1px;height:696px;background:#d9d9d9"></div>
<svg style="left:12px;top:30px" width="17" height="21" viewBox="0 0 17 21"><path d="M1 1H11L15.5 5.5V19.5H1Z" fill="#fff" stroke="#000" stroke-width="1.2"/><path d="M11 1V5.5H15.5" fill="none" stroke="#000"/><path d="M2.5 9H14" stroke="#3030ff" stroke-width="1"/><rect x="5" y="7.5" width="3.5" height="3" fill="#fff" stroke="#3030ff" stroke-width=".8"/><rect x="9.5" y="7" width="2" height="4" fill="#fff" stroke="#3030ff" stroke-width=".8"/><path d="M5 14.5H15.5M5 17H15.5M5 14.5V19.5M9 14.5V19.5" stroke="#000" stroke-width="1"/></svg>
<div class="abs" style="left:0;top:109px;width:1366px;height:2px;background:#828282"></div>
<div class="abs" id="canvas" style="left:0;top:111px;width:1366px;height:696px;background:#fff;overflow:hidden">
<div class="abs" style="left:0;top:0;width:2px;height:696px;background:#8f8f8f"></div>
<svg style="left:0;top:-111px" width="1366" height="900" viewBox="0 0 1366 900" shape-rendering="auto">
<rect x="93.5" y="121.5" width="1158" height="800" fill="none" stroke="#000" stroke-width="1"/>
<g stroke="#0000ff" stroke-width="2" fill="none" shape-rendering="crispEdges">
<path d="M148 133.5H1237V900"/><path d="M115 465.5V133.5H149"/><path d="M115 900V525"/>
<path d="M148 133V900"/>
<path d="M148 172.5H341V133"/>
<path d="M129 133V465.5"/>
<path d="M115 299.5H148M115 465H148"/>
<path d="M115 526H148M115 622H148M115 691H148M115 759.5H148"/>
<path d="M129 526V900"/>
<path d="M727 900V774H1237"/>
<path d="M746 774V900M774 774V900M837 774V900M879 774V900M906 774V900"/>
</g>
<g stroke="#000" stroke-width="1" shape-rendering="crispEdges"><path d="M727 788.5H906M727 801.5H906"/></g>
<text transform="translate(125.5,246.25) rotate(-90) skewX(-15) scale(0.62,1)" textLength="100.8" lengthAdjust="spacing" font-family="'DejaVu Sans',sans-serif" font-weight="200" font-size="12.5" fill="#000" stroke="#000" stroke-width="0.55">Перв. примен.</text>
<text transform="translate(125.5,403.8) rotate(-90) skewX(-15) scale(0.62,1)" textLength="67.7" lengthAdjust="spacing" font-family="'DejaVu Sans',sans-serif" font-weight="200" font-size="12.5" fill="#000" stroke="#000" stroke-width="0.55">Справ. №</text>
<text transform="translate(125.5,605.0) rotate(-90) skewX(-15) scale(0.62,1)" textLength="101.6" lengthAdjust="spacing" font-family="'DejaVu Sans',sans-serif" font-weight="200" font-size="12.5" fill="#000" stroke="#000" stroke-width="0.55">Подп. и дата</text>
<text transform="translate(125.5,686.25) rotate(-90) skewX(-15) scale(0.62,1)" textLength="97.6" lengthAdjust="spacing" font-family="'DejaVu Sans',sans-serif" font-weight="200" font-size="12.5" fill="#000" stroke="#000" stroke-width="0.55">Инв. № дубл.</text>
<text transform="translate(125.5,755.5) rotate(-90) skewX(-15) scale(0.62,1)" textLength="98.4" lengthAdjust="spacing" font-family="'DejaVu Sans',sans-serif" font-weight="200" font-size="12.5" fill="#000" stroke="#000" stroke-width="0.55">Взам. инв. №</text>
<text transform="translate(125.5,839.5) rotate(-90) skewX(-15) scale(0.62,1)" textLength="101.6" lengthAdjust="spacing" font-family="'DejaVu Sans',sans-serif" font-weight="200" font-size="12.5" fill="#000" stroke="#000" stroke-width="0.55">Подп. и дата</text>
<g stroke="#0000ff" stroke-width="2" fill="none" stroke-linejoin="miter">
<path d="M475.5 287H485.5"/>
<path d="M475.5 287Q468 293 464 302M485.5 287Q494 293 498 302"/>
<path d="M464 302H498M464 302V355L441.5 374M498 302V355L518 374M441 374H518.5M441.5 374V501M518 374V501"/>
<path d="M417.5 547.5V501.5H549V547.5"/>
</g>
<clipPath id="h1"><polygon points="418,502 548.5,502 548.5,547.5 418,547.5"/></clipPath><g clip-path="url(#h1)" stroke="#000" stroke-width="0.72" shape-rendering="crispEdges"><line x1="410" y1="505.05" x2="556" y2="359.05"/><line x1="410" y1="505.05" x2="556" y2="359.05"/><line x1="410" y1="505.05" x2="556" y2="359.05"/><line x1="410" y1="516.80" x2="556" y2="370.80"/><line x1="410" y1="516.80" x2="556" y2="370.80"/><line x1="410" y1="516.80" x2="556" y2="370.80"/><line x1="410" y1="528.55" x2="556" y2="382.55"/><line x1="410" y1="528.55" x2="556" y2="382.55"/><line x1="410" y1="528.55" x2="556" y2="382.55"/><line x1="410" y1="540.30" x2="556" y2="394.30"/><line x1="410" y1="540.30" x2="556" y2="394.30"/><line x1="410" y1="540.30" x2="556" y2="394.30"/><line x1="410" y1="552.05" x2="556" y2="406.05"/><line x1="410" y1="552.05" x2="556" y2="406.05"/><line x1="410" y1="552.05" x2="556" y2="406.05"/><line x1="410" y1="563.80" x2="556" y2="417.80"/><line x1="410" y1="563.80" x2="556" y2="417.80"/><line x1="410" y1="563.80" x2="556" y2="417.80"/><line x1="410" y1="575.55" x2="556" y2="429.55"/><line x1="410" y1="575.55" x2="556" y2="429.55"/><line x1="410" y1="575.55" x2="556" y2="429.55"/><line x1="410" y1="587.30" x2="556" y2="441.30"/><line x1="410" y1="587.30" x2="556" y2="441.30"/><line x1="410" y1="587.30" x2="556" y2="441.30"/><line x1="410" y1="599.05" x2="556" y2="453.05"/><line x1="410" y1="599.05" x2="556" y2="453.05"/><line x1="410" y1="599.05" x2="556" y2="453.05"/><line x1="410" y1="610.80" x2="556" y2="464.80"/><line x1="410" y1="610.80" x2="556" y2="464.80"/><line x1="410" y1="610.80" x2="556" y2="464.80"/><line x1="410" y1="622.55" x2="556" y2="476.55"/><line x1="410" y1="622.55" x2="556" y2="476.55"/><line x1="410" y1="622.55" x2="556" y2="476.55"/><line x1="410" y1="634.30" x2="556" y2="488.30"/><line x1="410" y1="634.30" x2="556" y2="488.30"/><line x1="410" y1="634.30" x2="556" y2="488.30"/><line x1="410" y1="646.05" x2="556" y2="500.05"/><line x1="410" y1="646.05" x2="556" y2="500.05"/><line x1="410" y1="646.05" x2="556" y2="500.05"/><line x1="410" y1="657.80" x2="556" y2="511.80"/><line x1="410" y1="657.80" x2="556" y2="511.80"/><line x1="410" y1="657.80" x2="556" y2="511.80"/><line x1="410" y1="669.55" x2="556" y2="523.55"/><line x1="410" y1="669.55" x2="556" y2="523.55"/><line x1="410" y1="669.55" x2="556" y2="523.55"/><line x1="410" y1="681.30" x2="556" y2="535.30"/><line x1="410" y1="681.30" x2="556" y2="535.30"/><line x1="410" y1="681.30" x2="556" y2="535.30"/><line x1="410" y1="693.05" x2="556" y2="547.05"/><line x1="410" y1="693.05" x2="556" y2="547.05"/><line x1="410" y1="693.05" x2="556" y2="547.05"/></g>
<line x1="372" y1="287.5" x2="476" y2="287.5" stroke="#000" stroke-width="1" shape-rendering="crispEdges"/>
<line x1="373.5" y1="502.5" x2="428" y2="502.5" stroke="#000" stroke-width="1" shape-rendering="crispEdges"/>
<line x1="377.5" y1="288" x2="378.5" y2="502" stroke="#000" stroke-width="1" shape-rendering="crispEdges"/>
<rect x="376.0" y="291" width="3" height="10" fill="#000" shape-rendering="crispEdges"/><rect x="375.0" y="298" width="5" height="3" fill="#000" shape-rendering="crispEdges"/>
<rect x="377.0" y="489" width="3" height="10" fill="#000" shape-rendering="crispEdges"/><rect x="376.0" y="489" width="5" height="3" fill="#000" shape-rendering="crispEdges"/>
<text transform="translate(398,395) rotate(-90) skewX(-15) scale(0.62,1)" text-anchor="middle" font-family="'DejaVu Sans',sans-serif" font-weight="200" font-size="17" fill="#c9d3a8" stroke="#c9d3a8" stroke-width="0.3" opacity="0.9">Н</text>
<clipPath id="h2"><polygon points="679,287 679,546.5 812,546.5"/></clipPath><g clip-path="url(#h2)" stroke="#000" stroke-width="0.72" shape-rendering="crispEdges"><line x1="670" y1="288.60" x2="820" y2="138.60"/><line x1="670" y1="288.60" x2="820" y2="138.60"/><line x1="670" y1="288.60" x2="820" y2="138.60"/><line x1="670" y1="300.45" x2="820" y2="150.45"/><line x1="670" y1="300.45" x2="820" y2="150.45"/><line x1="670" y1="300.45" x2="820" y2="150.45"/><line x1="670" y1="312.30" x2="820" y2="162.30"/><line x1="670" y1="312.30" x2="820" y2="162.30"/><line x1="670" y1="312.30" x2="820" y2="162.30"/><line x1="670" y1="324.15" x2="820" y2="174.15"/><line x1="670" y1="324.15" x2="820" y2="174.15"/><line x1="670" y1="324.15" x2="820" y2="174.15"/><line x1="670" y1="336.00" x2="820" y2="186.00"/><line x1="670" y1="336.00" x2="820" y2="186.00"/><line x1="670" y1="336.00" x2="820" y2="186.00"/><line x1="670" y1="347.85" x2="820" y2="197.85"/><line x1="670" y1="347.85" x2="820" y2="197.85"/><line x1="670" y1="347.85" x2="820" y2="197.85"/><line x1="670" y1="359.70" x2="820" y2="209.70"/><line x1="670" y1="359.70" x2="820" y2="209.70"/><line x1="670" y1="359.70" x2="820" y2="209.70"/><line x1="670" y1="371.55" x2="820" y2="221.55"/><line x1="670" y1="371.55" x2="820" y2="221.55"/><line x1="670" y1="371.55" x2="820" y2="221.55"/><line x1="670" y1="383.40" x2="820" y2="233.40"/><line x1="670" y1="383.40" x2="820" y2="233.40"/><line x1="670" y1="383.40" x2="820" y2="233.40"/><line x1="670" y1="395.25" x2="820" y2="245.25"/><line x1="670" y1="395.25" x2="820" y2="245.25"/><line x1="670" y1="395.25" x2="820" y2="245.25"/><line x1="670" y1="407.10" x2="820" y2="257.10"/><line x1="670" y1="407.10" x2="820" y2="257.10"/><line x1="670" y1="407.10" x2="820" y2="257.10"/><line x1="670" y1="418.95" x2="820" y2="268.95"/><line x1="670" y1="418.95" x2="820" y2="268.95"/><line x1="670" y1="418.95" x2="820" y2="268.95"/><line x1="670" y1="430.80" x2="820" y2="280.80"/><line x1="670" y1="430.80" x2="820" y2="280.80"/><line x1="670" y1="430.80" x2="820" y2="280.80"/><line x1="670" y1="442.65" x2="820" y2="292.65"/><line x1="670" y1="442.65" x2="820" y2="292.65"/><line x1="670" y1="442.65" x2="820" y2="292.65"/><line x1="670" y1="454.50" x2="820" y2="304.50"/><line x1="670" y1="454.50" x2="820" y2="304.50"/><line x1="670" y1="454.50" x2="820" y2="304.50"/><line x1="670" y1="466.35" x2="820" y2="316.35"/><line x1="670" y1="466.35" x2="820" y2="316.35"/><line x1="670" y1="466.35" x2="820" y2="316.35"/><line x1="670" y1="478.20" x2="820" y2="328.20"/><line x1="670" y1="478.20" x2="820" y2="328.20"/><line x1="670" y1="478.20" x2="820" y2="328.20"/><line x1="670" y1="490.05" x2="820" y2="340.05"/><line x1="670" y1="490.05" x2="820" y2="340.05"/><line x1="670" y1="490.05" x2="820" y2="340.05"/><line x1="670" y1="501.90" x2="820" y2="351.90"/><line x1="670" y1="501.90" x2="820" y2="351.90"/><line x1="670" y1="501.90" x2="820" y2="351.90"/><line x1="670" y1="513.75" x2="820" y2="363.75"/><line x1="670" y1="513.75" x2="820" y2="363.75"/><line x1="670" y1="513.75" x2="820" y2="363.75"/><line x1="670" y1="525.60" x2="820" y2="375.60"/><line x1="670" y1="525.60" x2="820" y2="375.60"/><line x1="670" y1="525.60" x2="820" y2="375.60"/><line x1="670" y1="537.45" x2="820" y2="387.45"/><line x1="670" y1="537.45" x2="820" y2="387.45"/><line x1="670" y1="537.45" x2="820" y2="387.45"/><line x1="670" y1="549.30" x2="820" y2="399.30"/><line x1="670" y1="549.30" x2="820" y2="399.30"/><line x1="670" y1="549.30" x2="820" y2="399.30"/><line x1="670" y1="561.15" x2="820" y2="411.15"/><line x1="670" y1="561.15" x2="820" y2="411.15"/><line x1="670" y1="561.15" x2="820" y2="411.15"/><line x1="670" y1="573.00" x2="820" y2="423.00"/><line x1="670" y1="573.00" x2="820" y2="423.00"/><line x1="670" y1="573.00" x2="820" y2="423.00"/><line x1="670" y1="584.85" x2="820" y2="434.85"/><line x1="670" y1="584.85" x2="820" y2="434.85"/><line x1="670" y1="584.85" x2="820" y2="434.85"/><line x1="670" y1="596.70" x2="820" y2="446.70"/><line x1="670" y1="596.70" x2="820" y2="446.70"/><line x1="670" y1="596.70" x2="820" y2="446.70"/><line x1="670" y1="608.55" x2="820" y2="458.55"/><line x1="670" y1="608.55" x2="820" y2="458.55"/><line x1="670" y1="608.55" x2="820" y2="458.55"/><line x1="670" y1="620.40" x2="820" y2="470.40"/><line x1="670" y1="620.40" x2="820" y2="470.40"/><line x1="670" y1="620.40" x2="820" y2="470.40"/><line x1="670" y1="632.25" x2="820" y2="482.25"/><line x1="670" y1="632.25" x2="820" y2="482.25"/><line x1="670" y1="632.25" x2="820" y2="482.25"/><line x1="670" y1="644.10" x2="820" y2="494.10"/><line x1="670" y1="644.10" x2="820" y2="494.10"/><line x1="670" y1="644.10" x2="820" y2="494.10"/><line x1="670" y1="655.95" x2="820" y2="505.95"/><line x1="670" y1="655.95" x2="820" y2="505.95"/><line x1="670" y1="655.95" x2="820" y2="505.95"/><line x1="670" y1="667.80" x2="820" y2="517.80"/><line x1="670" y1="667.80" x2="820" y2="517.80"/><line x1="670" y1="667.80" x2="820" y2="517.80"/><line x1="670" y1="679.65" x2="820" y2="529.65"/><line x1="670" y1="679.65" x2="820" y2="529.65"/><line x1="670" y1="679.65" x2="820" y2="529.65"/><line x1="670" y1="691.50" x2="820" y2="541.50"/><line x1="670" y1="691.50" x2="820" y2="541.50"/><line x1="670" y1="691.50" x2="820" y2="541.50"/></g>
<g stroke="#0000ff" stroke-width="2" fill="none">
<path d="M678.5 285.5H785.5V356H678.5Z"/>
<path d="M678.5 356V547H877"/>
<path d="M678.5 285.5L813 547M785.5 356L877 547"/>
</g>
<line x1="678.5" y1="244" x2="678.5" y2="285" stroke="#000" stroke-width="1" shape-rendering="crispEdges"/>
<line x1="785.5" y1="244" x2="785.5" y2="285" stroke="#000" stroke-width="1" shape-rendering="crispEdges"/>
<line x1="678.5" y1="249.5" x2="785.5" y2="249.5" stroke="#000" stroke-width="1" shape-rendering="crispEdges"/>
<rect x="682" y="248.0" width="10" height="3" fill="#000" shape-rendering="crispEdges"/><rect x="689" y="247.0" width="3" height="5" fill="#000" shape-rendering="crispEdges"/>
<rect x="772" y="248.0" width="10" height="3" fill="#000" shape-rendering="crispEdges"/><rect x="772" y="247.0" width="3" height="5" fill="#000" shape-rendering="crispEdges"/>
<text transform="translate(731,241) skewX(-15) scale(0.62,1)" text-anchor="middle" font-family="'DejaVu Sans',sans-serif" font-weight="200" font-size="19" fill="#20200a" stroke="#20200a" stroke-width="0.45" opacity="1">0,25 Мс</text>
<line x1="635" y1="285.5" x2="678" y2="285.5" stroke="#000" stroke-width="1" shape-rendering="crispEdges"/>
<line x1="628" y1="356.5" x2="678" y2="356.5" stroke="#000" stroke-width="1" shape-rendering="crispEdges"/>
<line x1="628" y1="547.5" x2="678" y2="547.5" stroke="#000" stroke-width="1" shape-rendering="crispEdges"/>
<line x1="640.5" y1="286" x2="640.5" y2="356" stroke="#000" stroke-width="1" shape-rendering="crispEdges"/>
<rect x="639.0" y="289" width="3" height="10" fill="#000" shape-rendering="crispEdges"/><rect x="638.0" y="296" width="5" height="3" fill="#000" shape-rendering="crispEdges"/>
<rect x="639.0" y="343" width="3" height="10" fill="#000" shape-rendering="crispEdges"/><rect x="638.0" y="343" width="5" height="3" fill="#000" shape-rendering="crispEdges"/>
<line x1="633.5" y1="357" x2="633.5" y2="547" stroke="#000" stroke-width="1" shape-rendering="crispEdges"/>
<rect x="632.0" y="360" width="3" height="10" fill="#000" shape-rendering="crispEdges"/><rect x="631.0" y="367" width="5" height="3" fill="#000" shape-rendering="crispEdges"/>
<rect x="632.0" y="534" width="3" height="10" fill="#000" shape-rendering="crispEdges"/><rect x="631.0" y="534" width="5" height="3" fill="#000" shape-rendering="crispEdges"/>
<text transform="translate(632,320) rotate(-90) skewX(-15) scale(0.62,1)" text-anchor="middle" font-family="'DejaVu Sans',sans-serif" font-weight="200" font-size="19" fill="#20200a" stroke="#20200a" stroke-width="0.45" opacity="1">0,25Н</text>
<text transform="translate(626,450) rotate(-90) skewX(-15) scale(0.62,1)" text-anchor="middle" font-family="'DejaVu Sans',sans-serif" font-weight="200" font-size="19" fill="#20200a" stroke="#20200a" stroke-width="0.45" opacity="1">0,75 Н</text>
<line x1="678.5" y1="548" x2="678.5" y2="654" stroke="#000" stroke-width="1" shape-rendering="crispEdges"/>
<line x1="813.5" y1="548" x2="813.5" y2="622" stroke="#000" stroke-width="1" shape-rendering="crispEdges"/>
<line x1="876.5" y1="548" x2="876.5" y2="654" stroke="#000" stroke-width="1" shape-rendering="crispEdges"/>
<line x1="678.5" y1="616.5" x2="813.5" y2="616.5" stroke="#000" stroke-width="1" shape-rendering="crispEdges"/>
<rect x="682" y="615.0" width="10" height="3" fill="#000" shape-rendering="crispEdges"/><rect x="689" y="614.0" width="3" height="5" fill="#000" shape-rendering="crispEdges"/>
<rect x="800" y="615.0" width="10" height="3" fill="#000" shape-rendering="crispEdges"/><rect x="800" y="614.0" width="3" height="5" fill="#000" shape-rendering="crispEdges"/>
<line x1="678.5" y1="648.5" x2="876.5" y2="648.5" stroke="#000" stroke-width="1" shape-rendering="crispEdges"/>
<rect x="682" y="647.0" width="10" height="3" fill="#000" shape-rendering="crispEdges"/><rect x="689" y="646.0" width="3" height="5" fill="#000" shape-rendering="crispEdges"/>
<rect x="863" y="647.0" width="10" height="3" fill="#000" shape-rendering="crispEdges"/><rect x="863" y="646.0" width="3" height="5" fill="#000" shape-rendering="crispEdges"/>
<text transform="translate(742,608) skewX(-15) scale(0.62,1)" text-anchor="middle" font-family="'DejaVu Sans',sans-serif" font-weight="200" font-size="19" fill="#20200a" stroke="#20200a" stroke-width="0.45" opacity="1">Мс</text>
<text transform="translate(775,640.5) skewX(-15) scale(0.62,1)" text-anchor="middle" font-family="'DejaVu Sans',sans-serif" font-weight="200" font-size="19" fill="#20200a" stroke="#20200a" stroke-width="0.45" opacity="1">1,25Мс</text>
</svg></div>
<div class="abs" style="left:0;top:111px;width:42px;height:358px;border:2px solid #8b8b8b;border-top:0;border-left-width:1.5px;border-radius:0 0 3px 3px;background:linear-gradient(#fbfbfb 0,#f6f6f6 35%,#e6e6e6 80%,#dedede 100%);box-shadow:inset -1px -1px 0 #fff,inset 1px 0 0 #fff"></div>
<div class="abs" style="left:2px;top:111px;width:37px;height:22px;background:#8d8d8d"></div>
<svg style="left:2px;top:111px" width="39" height="21" viewBox="0 0 39 21"><path d="M6 8.5H14.5L10.25 13Z" fill="#000"/><path d="M25 7L32.5 14.5M32.5 7L25 14.5" stroke="#000" stroke-width="1.7"/></svg>
<div class="sel" style="left:4px;top:162px;width:17px;height:17px"></div>
<svg style="left:5.12px;top:135.12px" width="13.76" height="13.76" viewBox="0 0 16 16"><rect x="2.5" y="1.5" width="4" height="4" fill="#fff" stroke="#0000ff" stroke-width="1.3"/><path d="M4.5 5.5V12" stroke="#0000ff" stroke-width="1.4"/><path d="M.5 12.5H8.5" stroke="#0000ff" stroke-width="1.6"/><path d="M1 13.5H15" stroke="#000" stroke-width="1"/><path d="M9.5 8L11.5 13L15.5 5" fill="none" stroke="#000" stroke-width="1"/></svg>
<svg style="left:22.32px;top:135.12px" width="13.76" height="13.76" viewBox="0 0 16 16"><circle cx="5" cy="4.5" r="3.5" fill="#fff" stroke="#000" stroke-width="1.1"/><path d="M11 6.5L15 15H7Z" fill="#fff" stroke="#000" stroke-width="1.1"/></svg>
<div class="abs" style="left:7px;top:154px;width:10px;height:2px;background:repeating-linear-gradient(90deg,#b9b9b9 0 2px,transparent 2px 4px)"></div>
<div class="abs" style="left:24px;top:154px;width:10px;height:2px;background:repeating-linear-gradient(90deg,#b9b9b9 0 2px,transparent 2px 4px)"></div>
<svg style="left:5.12px;top:163.12px" width="13.76" height="13.76" viewBox="0 0 16 16"><path d="M1 10.5L5.5 15M9.5 1.5L14.5 6" stroke="#000" stroke-width="1"/><path d="M3 12.5L12 4" stroke="#000" stroke-width="1"/><path d="M3 12.5L4.5 9L6.5 11ZM12 4L10.5 7.5L8.5 5.5Z" fill="#000"/></svg>
<svg style="left:22.32px;top:163.12px" width="13.76" height="13.76" viewBox="0 0 16 16"><path d="M1 4.5H15M1 10.5H15M5.5 1V15M11.5 1V15" stroke="#000" stroke-width="1.5"/><rect x="1.5" y="3" width="3" height="3" fill="#fff" stroke="#000"/><rect x="10" y="12" width="3" height="3" fill="#fff" stroke="#000"/><rect x="4" y="12" width="3" height="3" fill="#fff" stroke="#000"/></svg>
<div class="abs" style="left:7px;top:182px;width:10px;height:2px;background:repeating-linear-gradient(90deg,#b9b9b9 0 2px,transparent 2px 4px)"></div>
<div class="abs" style="left:24px;top:182px;width:10px;height:2px;background:repeating-linear-gradient(90deg,#b9b9b9 0 2px,transparent 2px 4px)"></div>
<svg style="left:5.12px;top:191.12px" width="13.76" height="13.76" viewBox="0 0 16 16"><path d="M1 14.5L7 8" stroke="#c8861a" stroke-width="3"/><path d="M1 14.5L7 8" stroke="#7a4e0a" stroke-width=".8" transform="translate(1.2,1.2)"/><path d="M5.5 3L9 1L14.5 7.5L13 9L10 7L8.5 8.5Z" fill="#5a5a5a" stroke="#000" stroke-width=".8"/><path d="M9 2L13.5 7" stroke="#d8d8d8" stroke-width="1"/></svg>
<svg style="left:22.32px;top:191.12px" width="13.76" height="13.76" viewBox="0 0 16 16"><path d="M1 7.5L7.5 1M4 10.5L10.5 4" stroke="#000" stroke-width="1.1"/><path d="M7 15H15M11 15V9" stroke="#000" stroke-width="1.4"/></svg>
<div class="abs" style="left:7px;top:210px;width:10px;height:2px;background:repeating-linear-gradient(90deg,#b9b9b9 0 2px,transparent 2px 4px)"></div>
<div class="abs" style="left:24px;top:210px;width:10px;height:2px;background:repeating-linear-gradient(90deg,#b9b9b9 0 2px,transparent 2px 4px)"></div>
<svg style="left:5.12px;top:219.12px" width="13.76" height="13.76" viewBox="0 0 16 16"><path d="M1 15L7.5 2L14.5 15" fill="none" stroke="#000" stroke-width="1.3"/><circle cx="7.5" cy="2.5" r="1.6" fill="#fff" stroke="#000"/><path d="M4 11C6 9 9 9 11.5 11" fill="none" stroke="#000" stroke-width=".9"/></svg>
<svg style="left:22.32px;top:219.12px" width="13.76" height="13.76" viewBox="0 0 16 16"><path d="M3 15L12 1" stroke="#000" stroke-width="1.6"/><path d="M1 4.5H7M4 1.5V7.5" stroke="#0aa81e" stroke-width="2"/><path d="M10 13.5H16" stroke="#f00" stroke-width="2"/></svg>
<div class="abs" style="left:7px;top:238px;width:10px;height:2px;background:repeating-linear-gradient(90deg,#b9b9b9 0 2px,transparent 2px 4px)"></div>
<div class="abs" style="left:24px;top:238px;width:10px;height:2px;background:repeating-linear-gradient(90deg,#b9b9b9 0 2px,transparent 2px 4px)"></div>
<svg style="left:5.12px;top:247.12px" width="13.76" height="13.76" viewBox="0 0 16 16"><rect x="1.5" y="2.5" width="13" height="11" fill="#fff" stroke="#000" stroke-width="1.4"/><rect x="4" y="5" width="6" height="3" fill="#fff" stroke="#0000ff" stroke-width="1.3"/><path d="M9 10.5H14M9 10.5V13.5M11.5 10.5V13.5" stroke="#000" stroke-width="1"/></svg>
<svg style="left:22.32px;top:247.12px" width="13.76" height="13.76" viewBox="0 0 16 16"><path d="M2.5 1.5H10.5L14.5 5.5V15.5H2.5Z" fill="#fff" stroke="#000" stroke-width="1.2"/><path d="M10.5 1.5V5.5H14.5" fill="none" stroke="#000"/><path d="M3 7.5H14M3 9.5H14M3 11.5H14M3 13.5H14M5.5 6V15M8 6V15M10.5 6V15M12.5 6V15" stroke="#000" stroke-width=".8"/></svg>
<div class="abs" style="left:7px;top:266px;width:10px;height:2px;background:repeating-linear-gradient(90deg,#b9b9b9 0 2px,transparent 2px 4px)"></div>
<div class="abs" style="left:24px;top:266px;width:10px;height:2px;background:repeating-linear-gradient(90deg,#b9b9b9 0 2px,transparent 2px 4px)"></div>
<div class="abs" style="left:6px;top:270px;width:28px;height:1px;background:#aaa"></div>
<svg style="left:6px;top:277px" width="18" height="17" viewBox="0 0 18 17"><path d="M1.5 8V16M15.5 8V16M1.5 12.5H15.5" stroke="#000" stroke-width="1.1"/><path d="M1.5 12.5L5 10.5V14.5ZM15.5 12.5L12 10.5V14.5Z" fill="#000"/><path d="M11 0L5.5 7H9L6 13L14 5H10L13.5 0Z" fill="#ffee00" stroke="#b8a800" stroke-width=".6"/></svg>
<svg style="left:6px;top:306px" width="18" height="17" viewBox="0 0 18 17"><path d="M1.5 1V15M15.5 1V15M1.5 5H15.5" stroke="#000" stroke-width="1.2"/><path d="M1.5 5L5.5 3V7ZM15.5 5L11.5 3V7Z" fill="#000"/><path d="M17.5 11.5V16H13Z" fill="#555"/></svg>
<svg style="left:6px;top:333px" width="18" height="17" viewBox="0 0 18 17"><circle cx="8" cy="8" r="6.5" fill="none" stroke="#9a9a9a" stroke-width="1.1"/><path d="M4 12L12 4" stroke="#9a9a9a" stroke-width="1.1"/><path d="M4 12L5 8.5L7.5 11ZM12 4L11 7.5L8.5 5Z" fill="#9a9a9a"/></svg>
<svg style="left:6px;top:361px" width="18" height="17" viewBox="0 0 18 17"><path d="M6 1C11 2 13 7 11 12" fill="none" stroke="#9a9a9a" stroke-width="1.1"/><path d="M1 13L10.5 4.5" stroke="#9a9a9a" stroke-width="1.1"/><path d="M10.5 4.5L9.5 8L7 5.5Z" fill="#9a9a9a"/><path d="M17.5 11.5V16H13Z" fill="#8a8a8a"/></svg>
<svg style="left:6px;top:389px" width="18" height="17" viewBox="0 0 18 17"><path d="M5 1L1 14.5H15" fill="none" stroke="#000" stroke-width="1.2"/><path d="M5.5 3C10.5 4 13.5 8 14 13" fill="none" stroke="#000" stroke-width="1.1"/><path d="M4.5 2.5L8.5 2.5L7 5.5ZM14.2 14L12 10.8L15.6 10.6Z" fill="#000"/><path d="M17.5 11.5V16H13Z" fill="#555"/></svg>
<svg style="left:6px;top:417px" width="18" height="17" viewBox="0 0 18 17"><path d="M1.5 1V14M15.5 1V14" stroke="#9a9a9a" stroke-width="1.1"/><path d="M1.5 4.5C5 2.5 12 2.5 15.5 4.5M1.5 14C5 11 12 11 15.5 14" fill="none" stroke="#9a9a9a" stroke-width="1.1"/><path d="M1.5 4.5L5 2V5.5ZM15.5 4.5L12 2V5.5Z" fill="#9a9a9a"/></svg>
<svg style="left:6px;top:445px" width="18" height="17" viewBox="0 0 18 17"><path d="M9.5 .5H17M9.5 .5V7.5M5 7.5H13" fill="none" stroke="#000" stroke-width="1.1"/><path d="M7 3L9.5 6.5L12 3" fill="none" stroke="#000" stroke-width="1.1"/><path d="M1 7.5H5M5 11H17" stroke="#0000ff" stroke-width="1.5"/><path d="M1 11L4 8M1 15L4.5 11.5M4 15L7.5 11.5M7 15L10.5 11.5M10 15L13.5 11.5M13 15L16.5 11.5" stroke="#0000ff" stroke-width="1.2"/></svg>
<div class="abs" style="left:0;top:807px;width:1366px;height:71px;background:linear-gradient(#f4f4f4 0,#f1f1f1 3px,#e3e3e3 4px,#e1e1e1 9px,#efefef 10px,#f5f5f5 39px,#f6f6f6 41px,#eeeeee 52px,#dedede 66px,#d6d6d6 70px)"></div>
<div class="abs" style="left:0;top:807px;width:1366px;height:70px;background:linear-gradient(90deg,rgba(255,255,255,0) 0,rgba(255,255,255,.25) 500px,rgba(255,255,255,.7) 1366px)"></div>
<div class="abs" style="left:1360px;top:817px;width:6px;height:60px;background:#fcfcfc"></div>
<div class="abs" style="left:6px;top:816px;width:1354px;height:31px;border:1px solid #ababab;border-bottom:1px solid #000;background:#fdfdfd"></div>
<div class="abs" style="left:10px;top:820px;width:1346px;height:24px;background:linear-gradient(#f7f7f7,#eeeeee)"></div>
<div class="abs" style="left:1px;top:816px;width:2px;height:55px;background:repeating-linear-gradient(#a9a9a9 0 2px,transparent 2px 4px)"></div>
<div class="abs" style="left:0;top:877px;width:1366px;height:1px;background:#a9a9a9"></div>
<div class="abs" style="left:0;top:878px;width:1366px;height:22px;background:#f0eded"></div>
<div class="abs" style="left:1279px;top:879px;width:1px;height:21px;background:#c9c5c5"></div>
<div class="t" style="left:7px;top:882px;font-size:15px;color:#000;letter-spacing:-0.034px;">Щелкните левой кнопкой мыши на объекте для его выделения (вместе с Ctrl или Shift - добавить к выделенным)</div>
<div class="abs" id="taskbar" style="left:1366px;top:0;width:74px;height:900px;background:linear-gradient(#766860 0,#7b6c64 60px,#887168 120px,#8d736a 170px,#98806c 215px,#a5865f 265px,#b08c62 310px,#b28e63 560px,#ab885c 600px,#a07c50 640px,#8f6e45 670px,#7e603c 698px,#795c3a 760px,#755838 820px,#7d603e 876px)">
<div class="abs" style="left:0;top:240px;width:74px;height:460px;background:linear-gradient(160deg,transparent 0,transparent 30%,rgba(255,255,255,.08) 45%,transparent 55%,transparent 70%,rgba(255,255,255,.06) 80%,transparent 100%)"></div>
<div class="abs" style="left:-0.4px;top:0;width:1.4px;height:900px;background:#5f4f42"></div>
<div class="abs" style="left:1px;top:0;width:1px;height:900px;background:rgba(255,255,255,.22)"></div>
<div class="abs" style="left:0;top:219px;width:74px;height:32px;border:1px solid rgba(50,34,22,.8);border-radius:3px;box-shadow:inset 0 0 0 1px rgba(255,255,255,0.5700000000000001);background:linear-gradient(rgba(255,255,255,0.33),rgba(255,255,255,0.1998) 47%,rgba(255,255,255,0.16740000000000002) 53%,rgba(255,255,255,0.19440000000000002))"></div>
<div class="abs" style="left:0;top:292px;width:74px;height:31px;border:1px solid rgba(50,34,22,.8);border-radius:3px;box-shadow:inset 0 0 0 1px rgba(255,255,255,0.55);background:linear-gradient(rgba(255,255,255,0.31),rgba(255,255,255,0.185) 47%,rgba(255,255,255,0.155) 53%,rgba(255,255,255,0.18))"></div>
<div class="abs" style="left:0;top:543px;width:74px;height:32px;border:1px solid rgba(50,34,22,.8);border-radius:3px;box-shadow:inset 0 0 0 1px rgba(255,255,255,1);background:linear-gradient(rgba(255,255,255,0.8),rgba(255,255,255,0.5476) 47%,rgba(255,255,255,0.4588) 53%,rgba(255,255,255,0.5327999999999999))"></div>
<div class="abs" style="left:1px;top:886px;width:73px;height:15px;border:1px solid rgba(50,35,20,.85);box-shadow:inset 0 0 0 1px rgba(255,255,255,.22);background:linear-gradient(rgba(255,255,255,.16),rgba(255,255,255,.06))"></div>
<svg style="left:15.0px;top:12.0px" width="44" height="44" viewBox="0 0 44 44"><defs><radialGradient id="og" cx="50%" cy="85%" r="75%"><stop offset="0" stop-color="#19d2f5"/><stop offset=".35" stop-color="#0a84c2"/><stop offset=".7" stop-color="#0a4f86"/><stop offset="1" stop-color="#0b3c6a"/></radialGradient><linearGradient id="oh" x1="0" y1="0" x2="0" y2="1"><stop offset="0" stop-color="#fff" stop-opacity=".75"/><stop offset="1" stop-color="#fff" stop-opacity=".12"/></linearGradient><linearGradient id="wr" x1="0" y1="0" x2="1" y2="1"><stop offset="0" stop-color="#e0401c"/><stop offset="1" stop-color="#f9a01a"/></linearGradient><linearGradient id="wg" x1="0" y1="0" x2="1" y2="1"><stop offset="0" stop-color="#b8d85a"/><stop offset="1" stop-color="#3e9a2e"/></linearGradient><linearGradient id="wb" x1="1" y1="0" x2="0" y2="1"><stop offset="0" stop-color="#9fd2f5"/><stop offset="1" stop-color="#0a6fc0"/></linearGradient><linearGradient id="wy" x1="0" y1="0" x2="1" y2="1"><stop offset="0" stop-color="#ffe98a"/><stop offset="1" stop-color="#f5a81a"/></linearGradient></defs><circle cx="22" cy="22" r="21.5" fill="url(#og)" stroke="#d8d0cc" stroke-width="1" stroke-opacity=".75"/><circle cx="22" cy="22" r="20.3" fill="none" stroke="#0a3a6e" stroke-width="1.4"/><path d="M3.5 23C3 10 12 2.5 22 2.5S41 10 40.5 23C30 19 14 19 3.5 23Z" fill="url(#oh)"/><path d="M13 19L15.5 9.5C18.5 8 21.5 8.5 24.5 10L22 20C19 18.2 16 18.2 13 19Z" fill="url(#wr)"/><path d="M26 11C29.5 13 33 13 36.5 11.5L33.5 21.5C30 23 27 22.5 23.5 20.8Z" fill="url(#wg)"/><path d="M12.5 21C15.5 19.8 18.5 20 21.5 21.8L19 31.5C16 29.8 13 29.8 10 31Z" fill="url(#wb)"/><path d="M23 22.5C26.5 24.5 29.5 24.7 33 23.3L30.3 33C27 34.5 24 34 20.5 32.2Z" fill="url(#wy)"/></svg>
<svg style="left:25.0px;top:79.0px" width="24" height="24" viewBox="0 0 24 24"><defs><linearGradient id="ieg" x1="0" y1="0" x2="0" y2="1"><stop offset="0" stop-color="#6fd0f7"/><stop offset="1" stop-color="#1a8fd8"/></linearGradient></defs><path d="M12.5 4A8.2 8.2 0 1 0 20.3 14.8H15.6A4 4 0 0 1 8.6 13.2H20.7A8.3 8.3 0 0 0 12.5 4ZM8.6 10.4A4 4 0 0 1 16.3 10.4Z" fill="url(#ieg)" stroke="#1477b8" stroke-width=".5"/><path d="M3.5 19.5C.5 17 4 8 12 4C17.5 1 21.5 1.5 21 5" fill="none" stroke="#f6c21a" stroke-width="1.6" stroke-linecap="round"/></svg>
<svg style="left:25.0px;top:115.0px" width="24" height="24" viewBox="0 0 24 24"><defs><linearGradient id="wmg" x1="0" y1="0" x2="0" y2="1"><stop offset="0" stop-color="#a8d4f2"/><stop offset="1" stop-color="#5fa4d8"/></linearGradient></defs><path d="M4 4.5H18L20 5.5V19.5L18 20.5H4Z" fill="url(#wmg)" stroke="#3f82b8" stroke-width=".7"/><path d="M18 4.5V20.5" stroke="#3f82b8" stroke-width=".6"/><circle cx="11" cy="12" r="5.6" fill="#f47a1c" stroke="#fff" stroke-width=".8"/><path d="M9 8.8V15.2L14.6 12Z" fill="#fff"/></svg>
<svg style="left:25.0px;top:151.5px" width="24" height="24" viewBox="0 0 24 24"><path d="M3 5.5H10L11.5 7H21V19H3Z" fill="#f3d97a" stroke="#d2ad45" stroke-width=".6"/><path d="M3 8.5H21V19.5H3Z" fill="#f7e49a" stroke="#d9b650" stroke-width=".6"/><path d="M5 4H7M9 4H11M14 5H16" stroke="#2fa82f" stroke-width="1.4"/><path d="M9 4.2H11" stroke="#d03030" stroke-width="1.4"/><path d="M14 5.2H16" stroke="#2a7fd8" stroke-width="1.4"/><path d="M5 21V16C5 14.5 6 14 7.5 14H16.5C18 14 19 14.5 19 16V21H15.5V18H8.5V21Z" fill="#58b4e8" stroke="#2a88c8" stroke-width=".6"/><path d="M6 15.5H18" stroke="#c6e8fa" stroke-width="1"/></svg>
<svg style="left:25.0px;top:188.5px" width="24" height="24" viewBox="0 0 24 24"><text x="12" y="20" text-anchor="middle" font-family="'Liberation Sans',sans-serif" font-weight="bold" font-size="22" fill="#3a5f7e" stroke="#2a4a64" stroke-width=".6" textLength="19" lengthAdjust="spacingAndGlyphs">M</text><path d="M3 5H8" stroke="#7fa3bf" stroke-width="1"/></svg>
<svg style="left:25.0px;top:222.0px" width="24" height="24" viewBox="0 0 24 24"><path d="M8 3L20 4.5V20.5L8 21Z" fill="#fff" stroke="#b7c4d8" stroke-width=".7"/><path d="M10 7H18M10 9.5H18M10 12H18M10 14.5H18M10 17H18" stroke="#a8b8d0" stroke-width=".8"/><path d="M3 5.5C6 3.5 9 3 12.5 3.5V18C9 17.5 6 18 3 20Z" fill="#2b5fb4" stroke="#1d478f" stroke-width=".6"/><path d="M3 5.5C6 3.5 9 3 12.5 3.5V9C9 8.5 6 9 3 11Z" fill="#4f83d4" opacity=".7"/><rect x="10.5" y="6.5" width="8" height="8" fill="#e9eef8" stroke="#2b5fb4" stroke-width=".8"/><text x="14.5" y="13.3" text-anchor="middle" font-family="'Liberation Sans',sans-serif" font-weight="bold" font-size="8" fill="#2b5fb4">W</text></svg>
<svg style="left:25.0px;top:258.5px" width="24" height="24" viewBox="0 0 24 24"><path d="M5 5L13 4L14.5 14.5L3.5 13Z" fill="#8fd08a" stroke="#6db868" stroke-width=".5"/><path d="M7 8.5L16 7.5L17 17L8 18Z" fill="#a9cdf2" stroke="#86b2e0" stroke-width=".5"/><path d="M11.5 8.5L20 6L22.5 16.5L14 19.5Z" fill="#f7dd5a" stroke="#e0c23a" stroke-width=".5"/></svg>
<svg style="left:25.0px;top:295.0px" width="24" height="24" viewBox="0 0 24 24"><defs><radialGradient id="ffb" cx="55%" cy="35%" r="60%"><stop offset="0" stop-color="#7fd0ff"/><stop offset="1" stop-color="#1a4fb0"/></radialGradient><linearGradient id="ffo" x1="0" y1="0" x2="0" y2="1"><stop offset="0" stop-color="#f9b21c"/><stop offset="1" stop-color="#d9411a"/></linearGradient></defs><circle cx="12.5" cy="11" r="8" fill="url(#ffb)"/><path d="M3.5 6C2 10 2 16 6.5 19.5C11 23 18 22 21 17C23 13.5 22.5 9 20.5 6C21 9 20 11.5 18.5 12.5C18.5 15.5 15.5 17.5 12 16.5C9.5 15.8 8.5 14 9 12.5C10 13.2 11.5 13 12.5 12C11 11.5 10 11 9.5 9.5C8.5 9.5 8 9 7.5 8C7 6.5 7.5 5 8.5 3.5C6 4 4.5 5 3.5 6Z" fill="url(#ffo)" stroke="#b8380f" stroke-width=".4"/></svg>
<svg style="left:25.0px;top:330.5px" width="24" height="24" viewBox="0 0 24 24"><path d="M2 14L9 10.5L12 13L7 17.5Z" fill="#3a8fd8"/><path d="M9 10.5L14.5 2.5C16.5 5 19 12 22 18C19.5 16.5 18 15.5 16.5 17L12 13Z" fill="#e8581c"/><path d="M7 17.5L12 13L16.5 17C14.5 18 13 20 11.5 21.5C10.5 20 9 18.5 7 17.5Z" fill="#b8280f"/><path d="M14.5 2.5C15 7 14 11 12 13L9 10.5Z" fill="#f79a2a"/></svg>
<svg style="left:25.0px;top:367.0px" width="24" height="24" viewBox="0 0 24 24"><rect x="2.5" y="2.5" width="19" height="19" fill="#fff" stroke="#ddd" stroke-width=".5"/><path d="M3 3H10L7.5 13L16 3H21L9.5 17L3 21Z" fill="#e0101c"/><path d="M13 11L21 19.5V21H13L16 18.5L11.5 13.5Z" fill="#1a1a1a"/></svg>
<svg style="left:25.0px;top:403.0px" width="24" height="24" viewBox="0 0 24 24"><path d="M3.5 3.5H19L21 5.5V21H3.5Z" fill="#1a3fd0" stroke="#0f2a9a" stroke-width=".7"/><rect x="8" y="3.5" width="8" height="5.5" fill="#d8dce8"/><rect x="12.5" y="4.3" width="2" height="4" fill="#1a3fd0"/><rect x="5.5" y="11.5" width="13.5" height="9" fill="#fff"/><path d="M5.5 14H19M5.5 16.5H19M5.5 19H19" stroke="#e04858" stroke-width="1.1"/></svg>
<svg style="left:25.0px;top:438.5px" width="24" height="24" viewBox="0 0 24 24"><path d="M5.5 3L10 9L20.5 7C19 12 16 17 10.5 19.5L8.5 21L7.5 18.5C4.5 18 3 16 3 15L5 13C4.5 9.5 4.5 6 5.5 3Z" fill="#f9b822"/><path d="M20.5 7C19 12 16 17 10.5 19.5C13 15 16 11 20.5 7Z" fill="#f0742a"/><path d="M7.5 18.5L8.5 21L10.5 19.5Z" fill="#fff"/><path d="M8 13.5L11 12.8" stroke="#7a4a10" stroke-width=".8"/></svg>
<svg style="left:25.0px;top:475.0px" width="24" height="24" viewBox="0 0 24 24"><circle cx="12" cy="12" r="10" fill="#1a1a1a"/><circle cx="12" cy="12" r="8" fill="#f7a41a"/><path d="M4.5 10C7 5 17 5 19.5 10C16 7.5 8 7.5 4.5 10Z" fill="#ffd27a" opacity=".8"/><path d="M7 16.5L12 6.5L14 10.5M9 14H17.5M14.5 12L17 17" fill="none" stroke="#2a2a2a" stroke-width="1.5"/></svg>
<svg style="left:25.0px;top:510.5px" width="24" height="24" viewBox="0 0 24 24"><defs><radialGradient id="sfg" cx="50%" cy="35%" r="65%"><stop offset="0" stop-color="#9ad0ff"/><stop offset="1" stop-color="#1f5fc8"/></radialGradient></defs><circle cx="12" cy="12" r="9" fill="#c8ccd4" stroke="#70747c" stroke-width=".8"/><circle cx="12" cy="12" r="7.2" fill="url(#sfg)" stroke="#3a4a6a" stroke-width=".5"/><path d="M17 6L13 13L11 11Z" fill="#e8281c"/><path d="M7 18L11 11L13 13Z" fill="#fff"/><path d="M12 5.5V7M12 17V18.5M5.5 12H7M17 12H18.5" stroke="#fff" stroke-width=".7"/></svg>
<svg style="left:25.0px;top:547.0px" width="24" height="24" viewBox="0 0 24 24"><defs><radialGradient id="kg1" cx="40%" cy="30%" r="75%"><stop offset="0" stop-color="#4fb4f2"/><stop offset="1" stop-color="#126fc4"/></radialGradient></defs><circle cx="12" cy="12" r="10.5" fill="url(#kg1)"/><path d="M12 2.2L14.8 6.6H9.2ZM12 21.8L9.2 17.4H14.8ZM2.2 12L6.6 9.2V14.8ZM21.8 12L17.4 14.8V9.2Z" fill="#fff"/><path d="M9.3 6.9H14.7M12 6.9V8.6" stroke="#fff" stroke-width="1.3"/><text x="7.6" y="16.6" font-family="'Liberation Sans',sans-serif" font-weight="bold" font-size="11.5" fill="#fff" stroke="#fff" stroke-width=".5">K</text><path d="M11.8 12.6L19.3 20.1" stroke="#fff" stroke-width="3"/></svg>
<div class="abs" style="left:37px;top:691px;width:24px;height:26px;border:1px solid rgba(40,25,10,.7);border-radius:3px;box-shadow:inset 0 0 0 1px rgba(255,255,255,.35);background:rgba(255,255,255,.12)"></div>
<svg style="left:38.0px;top:693.0px" width="22" height="22" viewBox="0 0 24 24"><path d="M6 3H15L18 6V21H6Z" fill="#c8dcf7" stroke="#7a9ad0" stroke-width=".8"/><path d="M8 9H16M8 12H16M8 15H16M8 18H16" stroke="#5a8ad8" stroke-width="1"/><path d="M4 11L8 16L14 2.5" fill="none" stroke="#e8101c" stroke-width="2.2" stroke-linecap="round" stroke-linejoin="round"/></svg>
<svg style="left:14.5px;top:722.0px" width="22" height="22" viewBox="0 0 24 24"><defs><radialGradient id="hg" cx="40%" cy="30%" r="75%"><stop offset="0" stop-color="#4a6aff"/><stop offset="1" stop-color="#0a14a8"/></radialGradient></defs><circle cx="12" cy="12" r="9" fill="url(#hg)" stroke="#c8ccd8" stroke-width="1.3"/><text x="12" y="17.5" text-anchor="middle" font-family="'Liberation Sans',sans-serif" font-weight="bold" font-size="15" fill="#fff">?</text></svg>
<svg style="left:44px;top:723px" width="9" height="22" viewBox="0 0 9 22"><path d="M3 1H8.5V4.5H3Z" fill="none" stroke="#fff" stroke-width="1.1"/><path d="M.5 3.5H6V7H.5Z" fill="#7e6242" stroke="#fff" stroke-width="1.1"/><path d="M1.5 16H7.5L4.5 19.5Z" fill="#fff"/></svg>
<svg style="left:14px;top:757px" width="7" height="13" viewBox="0 0 7 13"><path d="M6.5 .5V12.5L.5 6.5Z" fill="#fff"/></svg>
<svg style="left:8.5px;top:783.0px" width="22" height="22" viewBox="0 0 24 24"><rect x="8" y="6" width="14" height="11" fill="#6b5138" stroke="#fff" stroke-width="1.5"/><path d="M15 17V20M10.5 20.5H19.5" stroke="#fff" stroke-width="1.8"/><rect x="2.5" y="3.5" width="5" height="7" rx="1" fill="#8a7058" stroke="#fff" stroke-width="1.2"/><path d="M5 1.5V3.5M5 10.5V20H9" fill="none" stroke="#fff" stroke-width="1.5"/></svg>
<svg style="left:39.0px;top:783.0px" width="22" height="22" viewBox="0 0 24 24"><path d="M4 2V21" stroke="#fff" stroke-width="1.8"/><path d="M5 3C8 1.5 11 2 13 5V12C11 10 8 10 5 11Z" fill="#fff"/><path d="M13 6.5C15 8 18 8.5 21 7V13C18 14.5 15 14 13 12Z" fill="#fff"/><circle cx="16.5" cy="16.5" r="5.2" fill="#e0201c" stroke="#f8d0c8" stroke-width=".6"/><path d="M14.2 14.2L18.8 18.8M18.8 14.2L14.2 18.8" stroke="#fff" stroke-width="1.7"/></svg>
<svg style="left:9.0px;top:813.0px" width="22" height="22" viewBox="0 0 24 24"><path d="M2.5 8.5H6L12 2.5V21.5L6 15.5H2.5Z" fill="#fff" stroke="#e8e0d8" stroke-width=".6"/><path d="M14.5 9C16 11 16 13 14.5 15M17.5 6.5C20 10 20 14 17.5 17.5M20.5 4.5C23.5 9 23.5 15 20.5 19.5" fill="none" stroke="#fff" stroke-width="1.3" stroke-linecap="round"/></svg>
<div class="t" style="left:0px;top:845px;font-size:16px;color:#fff;letter-spacing:-1.000px;width:74px;text-align:center;text-indent:1px">16:45</div>
<div class="t" style="left:0px;top:867px;font-size:16px;color:#fff;letter-spacing:-1.050px;width:74px;text-align:center;text-indent:1px">19.03.2012</div>
<div class="t" style="left:15.5px;top:697px;font-size:14.5px;color:#fff;letter-spacing:0.400px;">EN</div>
</div>
<div class="abs" style="left:1235px;top:-1px;width:128px;height:24px;border:1px solid #43382f;border-radius:0 0 5px 5px;overflow:hidden;box-shadow:0 0 0 1px rgba(255,255,255,.35)">
<div class="abs" style="left:0;top:0;width:35px;height:23px;background:linear-gradient(rgba(240,236,233,.92) 0,rgba(214,207,202,.9) 46%,rgba(150,137,129,.95) 50%,rgba(160,148,140,.95) 80%,rgba(182,172,165,.95) 100%);box-shadow:inset 0 0 0 1px rgba(255,255,255,.55)"></div>
<div class="abs" style="left:35px;top:0;width:1px;height:23px;background:#43382f"></div>
<div class="abs" style="left:36px;top:0;width:32px;height:23px;background:linear-gradient(rgba(240,236,233,.92) 0,rgba(214,207,202,.9) 46%,rgba(150,137,129,.95) 50%,rgba(160,148,140,.95) 80%,rgba(182,172,165,.95) 100%);box-shadow:inset 0 0 0 1px rgba(255,255,255,.55)"></div>
<div class="abs" style="left:68px;top:0;width:1px;height:23px;background:#43382f"></div>
<div class="abs" style="left:69px;top:0;width:58px;height:23px;background:linear-gradient(#f0b3a4 0,#e59a86 45%,#cf4528 50%,#cc4024 75%,#d9694c 100%);box-shadow:inset 0 0 0 1px rgba(255,225,215,.55)"></div>
<div class="abs" style="left:69px;top:11px;width:58px;height:12px;background:radial-gradient(ellipse at 50% 100%,rgba(255,150,110,.35),transparent 70%)"></div>
</div>
<svg style="left:1235px;top:0" width="128" height="24" viewBox="0 0 128 24"><rect x="10.5" y="13.5" width="16" height="4" rx="1" fill="#fff" stroke="#46506a" stroke-width="1"/><path d="M46.5 2.5H59V15.5H46.5Z" fill="#fff" stroke="#46506a" stroke-width="1"/><rect x="49" y="5" width="7.5" height="8" fill="#b5aaa3"/><path d="M42.5 5.5H56V18.5H42.5Z" fill="#fff" stroke="#46506a" stroke-width="1"/><rect x="46" y="9" width="6.5" height="6" fill="#9f938b" stroke="#46506a" stroke-width=".8"/><path d="M91.5 4.5H95.5L98.5 8.5L101.5 4.5H105.5L100.7 11L105.5 17.5H101.5L98.5 13.5L95.5 17.5H91.5L96.3 11Z" fill="#fff" stroke="#46506a" stroke-width="1" stroke-linejoin="round"/></svg>
</div></body></html>
